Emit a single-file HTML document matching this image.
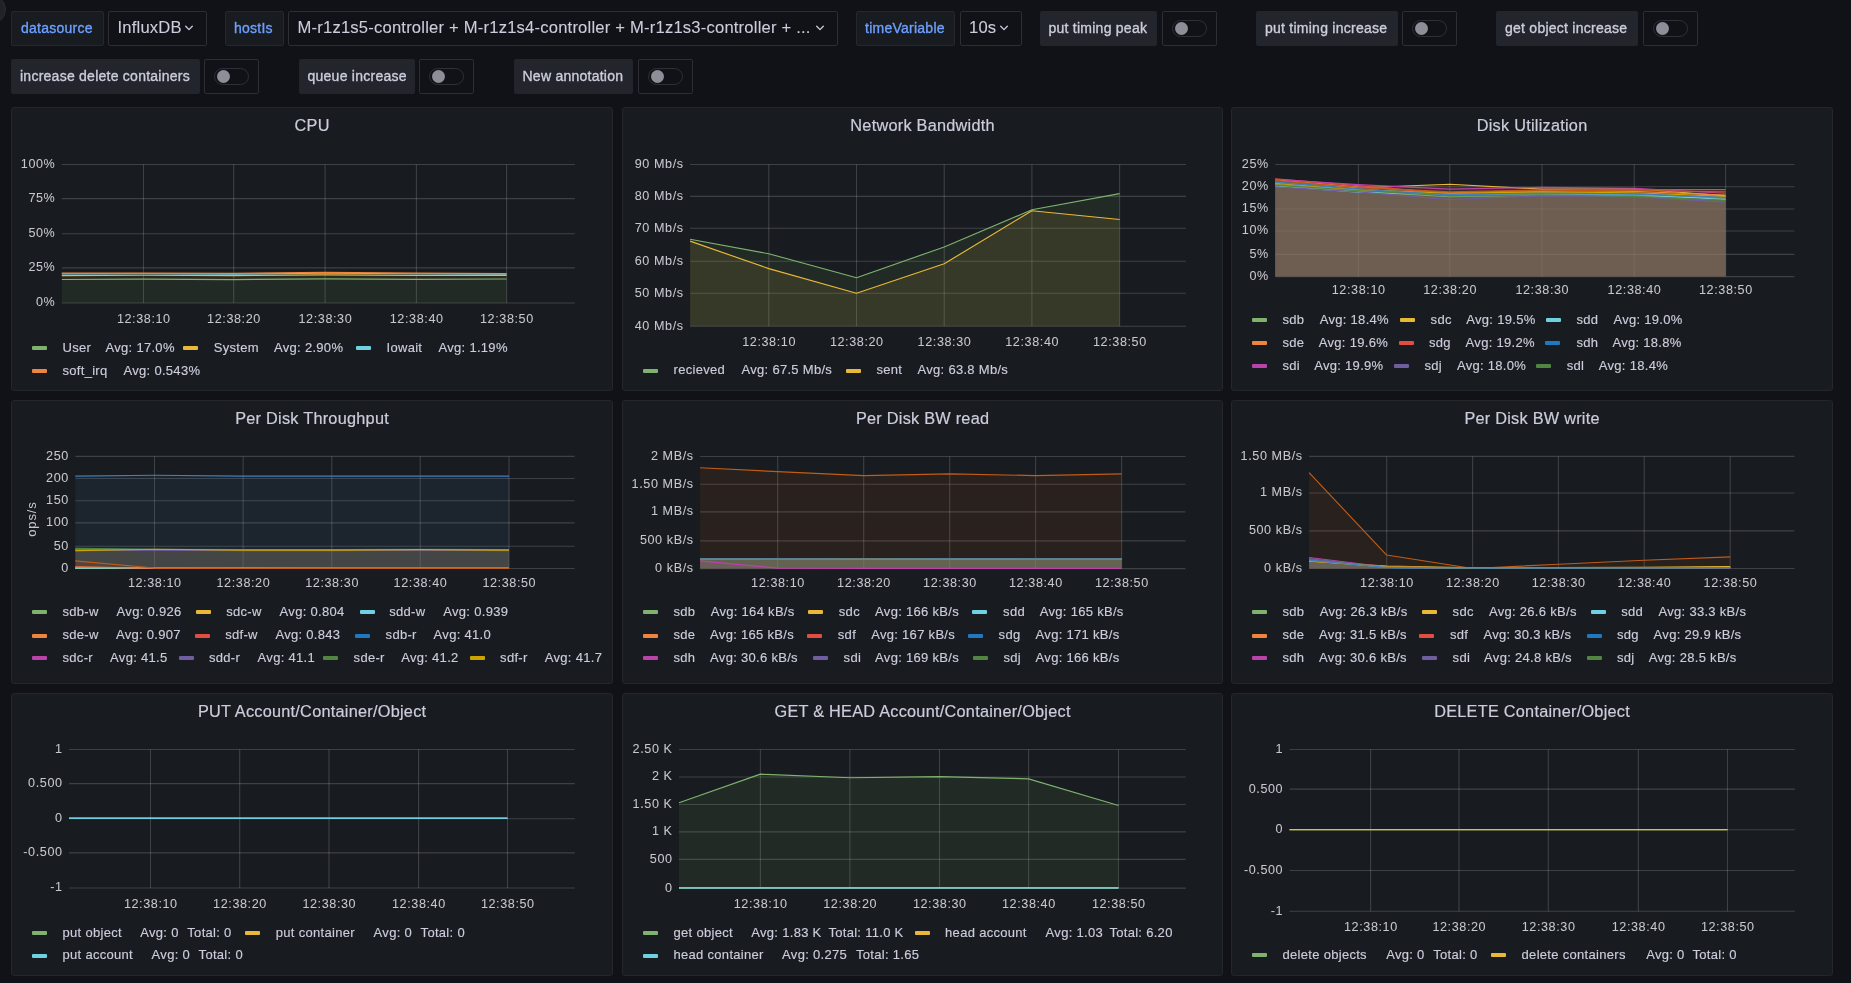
<!DOCTYPE html>
<html><head><meta charset="utf-8"><title>Grafana</title>
<style>
html,body{margin:0;padding:0;width:1851px;height:983px;overflow:hidden;background:#111217;font-family:"Liberation Sans", sans-serif;}
.t{position:absolute;white-space:nowrap;font-family:"Liberation Sans", sans-serif;}
.c{text-align:center;}
svg{overflow:visible;}
</style></head><body><div id="root" style="position:absolute;left:0;top:0;width:1851px;height:983px;will-change:transform">
<div style="position:absolute;left:-23px;top:-5px;width:29px;height:29px;border-radius:50%;background:#202226;border:1px solid #2b2d33;box-sizing:border-box"></div>
<div style="position:absolute;left:11px;top:11px;width:93px;height:35px;box-sizing:border-box;background:#181b1f;border:1px solid #25272c;border-radius:2px"></div>
<div class="t" style="left:21.0px;top:18.1px;font-size:14.0px;line-height:20px;color:#6e9fff;letter-spacing:0.25px;-webkit-text-stroke:0.35px #6e9fff;">datasource</div>
<div style="position:absolute;left:108px;top:11px;width:99px;height:35px;box-sizing:border-box;background:#111217;border:1px solid #2c2e33;border-radius:2px"></div>
<div class="t" style="left:117.5px;top:16.0px;font-size:16.6px;line-height:24px;color:#ccccdc;letter-spacing:0.2px;-webkit-text-stroke:0.1px #ccccdc;">InfluxDB</div>
<svg style="position:absolute;left:184.1px;top:24.0px" width="10" height="8"><path d="M1.7 2.3 L5 5.6 L8.3 2.3" fill="none" stroke="#ccccdc" stroke-width="1.3" stroke-linecap="round" stroke-linejoin="round"/></svg>
<div style="position:absolute;left:225px;top:11px;width:59px;height:35px;box-sizing:border-box;background:#181b1f;border:1px solid #25272c;border-radius:2px"></div>
<div class="t" style="left:234.0px;top:18.1px;font-size:14.0px;line-height:20px;color:#6e9fff;letter-spacing:0.25px;-webkit-text-stroke:0.35px #6e9fff;">hostIs</div>
<div style="position:absolute;left:288px;top:11px;width:550px;height:35px;box-sizing:border-box;background:#111217;border:1px solid #2c2e33;border-radius:2px"></div>
<div class="t" style="left:297.5px;top:16.0px;font-size:16.6px;line-height:24px;color:#ccccdc;letter-spacing:0.2px;-webkit-text-stroke:0.1px #ccccdc;">M-r1z1s5-controller + M-r1z1s4-controller + M-r1z1s3-controller + ...</div>
<svg style="position:absolute;left:815.1px;top:24.0px" width="10" height="8"><path d="M1.7 2.3 L5 5.6 L8.3 2.3" fill="none" stroke="#ccccdc" stroke-width="1.3" stroke-linecap="round" stroke-linejoin="round"/></svg>
<div style="position:absolute;left:856px;top:11px;width:99px;height:35px;box-sizing:border-box;background:#181b1f;border:1px solid #25272c;border-radius:2px"></div>
<div class="t" style="left:865.0px;top:18.1px;font-size:14.0px;line-height:20px;color:#6e9fff;letter-spacing:0.25px;-webkit-text-stroke:0.35px #6e9fff;">timeVariable</div>
<div style="position:absolute;left:960px;top:11px;width:62px;height:35px;box-sizing:border-box;background:#111217;border:1px solid #2c2e33;border-radius:2px"></div>
<div class="t" style="left:969.0px;top:16.0px;font-size:16.6px;line-height:24px;color:#ccccdc;letter-spacing:0.2px;-webkit-text-stroke:0.1px #ccccdc;">10s</div>
<svg style="position:absolute;left:999.1px;top:24.0px" width="10" height="8"><path d="M1.7 2.3 L5 5.6 L8.3 2.3" fill="none" stroke="#ccccdc" stroke-width="1.3" stroke-linecap="round" stroke-linejoin="round"/></svg>
<div style="position:absolute;left:1040px;top:11px;width:117px;height:35px;box-sizing:border-box;background:#22252b;border-radius:2px"></div>
<div class="t" style="left:1048.5px;top:18.1px;font-size:14.0px;line-height:20px;color:#ccccdc;letter-spacing:0.25px;-webkit-text-stroke:0.35px #ccccdc;">put timing peak</div>
<div style="position:absolute;left:1162px;top:11px;width:55px;height:35px;box-sizing:border-box;background:#111217;border:1px solid #2c2e33;border-radius:2px"></div>
<div style="position:absolute;left:1172px;top:19.5px;width:35px;height:17.5px;box-sizing:border-box;border:1px solid #2e3035;border-radius:9px;background:#111217"></div>
<div style="position:absolute;left:1174.8px;top:21.7px;width:13.4px;height:13.4px;border-radius:50%;background:#8e8e99"></div>
<div style="position:absolute;left:1256px;top:11px;width:142px;height:35px;box-sizing:border-box;background:#22252b;border-radius:2px"></div>
<div class="t" style="left:1265.0px;top:18.1px;font-size:14.0px;line-height:20px;color:#ccccdc;letter-spacing:0.25px;-webkit-text-stroke:0.35px #ccccdc;">put timing increase</div>
<div style="position:absolute;left:1402px;top:11px;width:55px;height:35px;box-sizing:border-box;background:#111217;border:1px solid #2c2e33;border-radius:2px"></div>
<div style="position:absolute;left:1412px;top:19.5px;width:35px;height:17.5px;box-sizing:border-box;border:1px solid #2e3035;border-radius:9px;background:#111217"></div>
<div style="position:absolute;left:1414.8px;top:21.7px;width:13.4px;height:13.4px;border-radius:50%;background:#8e8e99"></div>
<div style="position:absolute;left:1496px;top:11px;width:142px;height:35px;box-sizing:border-box;background:#22252b;border-radius:2px"></div>
<div class="t" style="left:1505.0px;top:18.1px;font-size:14.0px;line-height:20px;color:#ccccdc;letter-spacing:0.25px;-webkit-text-stroke:0.35px #ccccdc;">get object increase</div>
<div style="position:absolute;left:1643px;top:11px;width:55px;height:35px;box-sizing:border-box;background:#111217;border:1px solid #2c2e33;border-radius:2px"></div>
<div style="position:absolute;left:1653px;top:19.5px;width:35px;height:17.5px;box-sizing:border-box;border:1px solid #2e3035;border-radius:9px;background:#111217"></div>
<div style="position:absolute;left:1655.8px;top:21.7px;width:13.4px;height:13.4px;border-radius:50%;background:#8e8e99"></div>
<div style="position:absolute;left:11px;top:59px;width:189px;height:35px;box-sizing:border-box;background:#22252b;border-radius:2px"></div>
<div class="t" style="left:20.0px;top:66.1px;font-size:14.0px;line-height:20px;color:#ccccdc;letter-spacing:0.25px;-webkit-text-stroke:0.35px #ccccdc;">increase delete containers</div>
<div style="position:absolute;left:204px;top:59px;width:55px;height:35px;box-sizing:border-box;background:#111217;border:1px solid #2c2e33;border-radius:2px"></div>
<div style="position:absolute;left:214px;top:67.5px;width:35px;height:17.5px;box-sizing:border-box;border:1px solid #2e3035;border-radius:9px;background:#111217"></div>
<div style="position:absolute;left:216.8px;top:69.7px;width:13.4px;height:13.4px;border-radius:50%;background:#8e8e99"></div>
<div style="position:absolute;left:299px;top:59px;width:116px;height:35px;box-sizing:border-box;background:#22252b;border-radius:2px"></div>
<div class="t" style="left:307.5px;top:66.1px;font-size:14.0px;line-height:20px;color:#ccccdc;letter-spacing:0.25px;-webkit-text-stroke:0.35px #ccccdc;">queue increase</div>
<div style="position:absolute;left:419px;top:59px;width:55px;height:35px;box-sizing:border-box;background:#111217;border:1px solid #2c2e33;border-radius:2px"></div>
<div style="position:absolute;left:429px;top:67.5px;width:35px;height:17.5px;box-sizing:border-box;border:1px solid #2e3035;border-radius:9px;background:#111217"></div>
<div style="position:absolute;left:431.8px;top:69.7px;width:13.4px;height:13.4px;border-radius:50%;background:#8e8e99"></div>
<div style="position:absolute;left:514px;top:59px;width:119px;height:35px;box-sizing:border-box;background:#22252b;border-radius:2px"></div>
<div class="t" style="left:522.5px;top:66.1px;font-size:14.0px;line-height:20px;color:#ccccdc;letter-spacing:0.25px;-webkit-text-stroke:0.35px #ccccdc;">New annotation</div>
<div style="position:absolute;left:638px;top:59px;width:55px;height:35px;box-sizing:border-box;background:#111217;border:1px solid #2c2e33;border-radius:2px"></div>
<div style="position:absolute;left:648px;top:67.5px;width:35px;height:17.5px;box-sizing:border-box;border:1px solid #2e3035;border-radius:9px;background:#111217"></div>
<div style="position:absolute;left:650.8px;top:69.7px;width:13.4px;height:13.4px;border-radius:50%;background:#8e8e99"></div>
<div style="position:absolute;left:11px;top:107px;width:602px;height:284px;box-sizing:border-box;background:#181b1f;border:1px solid #24262b;border-radius:3px"></div>
<div class="t c" style="left:12.1px;width:600px;top:113.5px;font-size:16.3px;line-height:23px;color:#ccccdc;letter-spacing:0.25px;-webkit-text-stroke:0.2px #ccccdc;">CPU</div>
<svg style="position:absolute;left:0;top:0" width="1851" height="983" viewBox="0 0 1851 983"><line x1="61.8" y1="164.5" x2="574.9" y2="164.5" stroke="rgba(200,200,200,0.22)" stroke-width="1.1"/><line x1="61.8" y1="198.6" x2="574.9" y2="198.6" stroke="rgba(200,200,200,0.22)" stroke-width="1.1"/><line x1="61.8" y1="233.8" x2="574.9" y2="233.8" stroke="rgba(200,200,200,0.22)" stroke-width="1.1"/><line x1="61.8" y1="267.9" x2="574.9" y2="267.9" stroke="rgba(200,200,200,0.22)" stroke-width="1.1"/><line x1="61.8" y1="303.0" x2="574.9" y2="303.0" stroke="rgba(200,200,200,0.22)" stroke-width="1.1"/><line x1="143.5" y1="164.5" x2="143.5" y2="303.0" stroke="rgba(200,200,200,0.22)" stroke-width="1.1"/><line x1="233.7" y1="164.5" x2="233.7" y2="303.0" stroke="rgba(200,200,200,0.22)" stroke-width="1.1"/><line x1="325.1" y1="164.5" x2="325.1" y2="303.0" stroke="rgba(200,200,200,0.22)" stroke-width="1.1"/><line x1="416.4" y1="164.5" x2="416.4" y2="303.0" stroke="rgba(200,200,200,0.22)" stroke-width="1.1"/><line x1="506.6" y1="164.5" x2="506.6" y2="303.0" stroke="rgba(200,200,200,0.22)" stroke-width="1.1"/><polygon points="61.80,303.00 61.80,279.45 143.50,279.18 233.70,279.59 325.10,278.90 416.40,279.32 506.60,279.04 506.60,303.00" fill="#7EB26D" fill-opacity="0.1" stroke="none"/><polygon points="61.80,275.58 143.50,275.30 233.70,275.58 325.10,274.88 416.40,275.44 506.60,275.44 506.60,279.04 416.40,279.32 325.10,278.90 233.70,279.59 143.50,279.18 61.80,279.45" fill="#EAB839" fill-opacity="0.1" stroke="none"/><polygon points="61.80,273.92 143.50,273.78 233.70,274.05 325.10,273.22 416.40,273.78 506.60,274.19 506.60,275.44 416.40,275.44 325.10,274.88 233.70,275.58 143.50,275.30 61.80,275.58" fill="#6ED0E0" fill-opacity="0.1" stroke="none"/><polygon points="61.80,273.08 143.50,273.08 233.70,273.36 325.10,272.39 416.40,273.08 506.60,273.64 506.60,274.19 416.40,273.78 325.10,273.22 233.70,274.05 143.50,273.78 61.80,273.92" fill="#EF843C" fill-opacity="0.1" stroke="none"/><polyline points="61.80,279.45 143.50,279.18 233.70,279.59 325.10,278.90 416.40,279.32 506.60,279.04" fill="none" stroke="#7EB26D" stroke-width="1.15" stroke-linejoin="round"/><polyline points="61.80,275.58 143.50,275.30 233.70,275.58 325.10,274.88 416.40,275.44 506.60,275.44" fill="none" stroke="#EAB839" stroke-width="1.15" stroke-linejoin="round"/><polyline points="61.80,273.92 143.50,273.78 233.70,274.05 325.10,273.22 416.40,273.78 506.60,274.19" fill="none" stroke="#6ED0E0" stroke-width="1.15" stroke-linejoin="round"/><polyline points="61.80,273.08 143.50,273.08 233.70,273.36 325.10,272.39 416.40,273.08 506.60,273.64" fill="none" stroke="#EF843C" stroke-width="1.15" stroke-linejoin="round"/></svg>
<div class="t" style="right:1795.6px;top:154.9px;font-size:12.6px;line-height:18px;color:#c7c7d1;letter-spacing:0.6px;-webkit-text-stroke:0.05px #c7c7d1;">100%</div>
<div class="t" style="right:1795.6px;top:189.0px;font-size:12.6px;line-height:18px;color:#c7c7d1;letter-spacing:0.6px;-webkit-text-stroke:0.05px #c7c7d1;">75%</div>
<div class="t" style="right:1795.6px;top:224.2px;font-size:12.6px;line-height:18px;color:#c7c7d1;letter-spacing:0.6px;-webkit-text-stroke:0.05px #c7c7d1;">50%</div>
<div class="t" style="right:1795.6px;top:258.3px;font-size:12.6px;line-height:18px;color:#c7c7d1;letter-spacing:0.6px;-webkit-text-stroke:0.05px #c7c7d1;">25%</div>
<div class="t" style="right:1795.6px;top:293.4px;font-size:12.6px;line-height:18px;color:#c7c7d1;letter-spacing:0.6px;-webkit-text-stroke:0.05px #c7c7d1;">0%</div>
<div class="t c" style="left:-156.2px;width:600px;top:309.5px;font-size:12.6px;line-height:18px;color:#c7c7d1;letter-spacing:0.6px;-webkit-text-stroke:0.05px #c7c7d1;">12:38:10</div>
<div class="t c" style="left:-66.0px;width:600px;top:309.5px;font-size:12.6px;line-height:18px;color:#c7c7d1;letter-spacing:0.6px;-webkit-text-stroke:0.05px #c7c7d1;">12:38:20</div>
<div class="t c" style="left:25.4px;width:600px;top:309.5px;font-size:12.6px;line-height:18px;color:#c7c7d1;letter-spacing:0.6px;-webkit-text-stroke:0.05px #c7c7d1;">12:38:30</div>
<div class="t c" style="left:116.7px;width:600px;top:309.5px;font-size:12.6px;line-height:18px;color:#c7c7d1;letter-spacing:0.6px;-webkit-text-stroke:0.05px #c7c7d1;">12:38:40</div>
<div class="t c" style="left:206.9px;width:600px;top:309.5px;font-size:12.6px;line-height:18px;color:#c7c7d1;letter-spacing:0.6px;-webkit-text-stroke:0.05px #c7c7d1;">12:38:50</div>
<div style="position:absolute;left:32px;top:346px;width:15px;height:4px;border-radius:1px;background:#7EB26D"></div>
<div class="t" style="left:62.5px;top:337.7px;font-size:13.0px;line-height:19px;color:#ccccdc;letter-spacing:0.3px;-webkit-text-stroke:0.15px #ccccdc;">User</div>
<div class="t" style="left:105.5px;top:337.7px;font-size:13.0px;line-height:19px;color:#ccccdc;letter-spacing:0.3px;-webkit-text-stroke:0.15px #ccccdc;">Avg: 17.0%</div>
<div style="position:absolute;left:183px;top:346px;width:15px;height:4px;border-radius:1px;background:#EAB839"></div>
<div class="t" style="left:213.8px;top:337.7px;font-size:13.0px;line-height:19px;color:#ccccdc;letter-spacing:0.3px;-webkit-text-stroke:0.15px #ccccdc;">System</div>
<div class="t" style="left:274.0px;top:337.7px;font-size:13.0px;line-height:19px;color:#ccccdc;letter-spacing:0.3px;-webkit-text-stroke:0.15px #ccccdc;">Avg: 2.90%</div>
<div style="position:absolute;left:356.3px;top:346px;width:15px;height:4px;border-radius:1px;background:#6ED0E0"></div>
<div class="t" style="left:386.5px;top:337.7px;font-size:13.0px;line-height:19px;color:#ccccdc;letter-spacing:0.3px;-webkit-text-stroke:0.15px #ccccdc;">Iowait</div>
<div class="t" style="left:438.5px;top:337.7px;font-size:13.0px;line-height:19px;color:#ccccdc;letter-spacing:0.3px;-webkit-text-stroke:0.15px #ccccdc;">Avg: 1.19%</div>
<div style="position:absolute;left:32px;top:369px;width:15px;height:4px;border-radius:1px;background:#EF843C"></div>
<div class="t" style="left:62.5px;top:360.7px;font-size:13.0px;line-height:19px;color:#ccccdc;letter-spacing:0.3px;-webkit-text-stroke:0.15px #ccccdc;">soft_irq</div>
<div class="t" style="left:123.5px;top:360.7px;font-size:13.0px;line-height:19px;color:#ccccdc;letter-spacing:0.3px;-webkit-text-stroke:0.15px #ccccdc;">Avg: 0.543%</div>
<div style="position:absolute;left:622px;top:107px;width:601px;height:284px;box-sizing:border-box;background:#181b1f;border:1px solid #24262b;border-radius:3px"></div>
<div class="t c" style="left:622.6px;width:600px;top:113.5px;font-size:16.3px;line-height:23px;color:#ccccdc;letter-spacing:0.25px;-webkit-text-stroke:0.2px #ccccdc;">Network Bandwidth</div>
<svg style="position:absolute;left:0;top:0" width="1851" height="983" viewBox="0 0 1851 983"><line x1="690.1" y1="164.5" x2="1186.0" y2="164.5" stroke="rgba(200,200,200,0.22)" stroke-width="1.1"/><line x1="690.1" y1="196.4" x2="1186.0" y2="196.4" stroke="rgba(200,200,200,0.22)" stroke-width="1.1"/><line x1="690.1" y1="228.3" x2="1186.0" y2="228.3" stroke="rgba(200,200,200,0.22)" stroke-width="1.1"/><line x1="690.1" y1="261.3" x2="1186.0" y2="261.3" stroke="rgba(200,200,200,0.22)" stroke-width="1.1"/><line x1="690.1" y1="293.2" x2="1186.0" y2="293.2" stroke="rgba(200,200,200,0.22)" stroke-width="1.1"/><line x1="690.1" y1="326.2" x2="1186.0" y2="326.2" stroke="rgba(200,200,200,0.22)" stroke-width="1.1"/><line x1="768.8" y1="164.5" x2="768.8" y2="326.2" stroke="rgba(200,200,200,0.22)" stroke-width="1.1"/><line x1="856.5" y1="164.5" x2="856.5" y2="326.2" stroke="rgba(200,200,200,0.22)" stroke-width="1.1"/><line x1="944.2" y1="164.5" x2="944.2" y2="326.2" stroke="rgba(200,200,200,0.22)" stroke-width="1.1"/><line x1="1031.9" y1="164.5" x2="1031.9" y2="326.2" stroke="rgba(200,200,200,0.22)" stroke-width="1.1"/><line x1="1119.6" y1="164.5" x2="1119.6" y2="326.2" stroke="rgba(200,200,200,0.22)" stroke-width="1.1"/><polygon points="690.10,326.20 690.10,239.21 768.80,253.76 856.50,277.69 944.20,246.97 1031.90,209.78 1119.60,193.61 1119.60,326.20" fill="#7EB26D" fill-opacity="0.1" stroke="none"/><polygon points="690.10,326.20 690.10,241.15 768.80,268.63 856.50,293.21 944.20,263.78 1031.90,210.75 1119.60,219.48 1119.60,326.20" fill="#EAB839" fill-opacity="0.1" stroke="none"/><polyline points="690.10,239.21 768.80,253.76 856.50,277.69 944.20,246.97 1031.90,209.78 1119.60,193.61" fill="none" stroke="#7EB26D" stroke-width="1.15" stroke-linejoin="round"/><polyline points="690.10,241.15 768.80,268.63 856.50,293.21 944.20,263.78 1031.90,210.75 1119.60,219.48" fill="none" stroke="#EAB839" stroke-width="1.15" stroke-linejoin="round"/></svg>
<div class="t" style="right:1167.3px;top:154.9px;font-size:12.6px;line-height:18px;color:#c7c7d1;letter-spacing:0.6px;-webkit-text-stroke:0.05px #c7c7d1;">90 Mb/s</div>
<div class="t" style="right:1167.3px;top:186.8px;font-size:12.6px;line-height:18px;color:#c7c7d1;letter-spacing:0.6px;-webkit-text-stroke:0.05px #c7c7d1;">80 Mb/s</div>
<div class="t" style="right:1167.3px;top:218.7px;font-size:12.6px;line-height:18px;color:#c7c7d1;letter-spacing:0.6px;-webkit-text-stroke:0.05px #c7c7d1;">70 Mb/s</div>
<div class="t" style="right:1167.3px;top:251.7px;font-size:12.6px;line-height:18px;color:#c7c7d1;letter-spacing:0.6px;-webkit-text-stroke:0.05px #c7c7d1;">60 Mb/s</div>
<div class="t" style="right:1167.3px;top:283.6px;font-size:12.6px;line-height:18px;color:#c7c7d1;letter-spacing:0.6px;-webkit-text-stroke:0.05px #c7c7d1;">50 Mb/s</div>
<div class="t" style="right:1167.3px;top:316.6px;font-size:12.6px;line-height:18px;color:#c7c7d1;letter-spacing:0.6px;-webkit-text-stroke:0.05px #c7c7d1;">40 Mb/s</div>
<div class="t c" style="left:469.1px;width:600px;top:332.7px;font-size:12.6px;line-height:18px;color:#c7c7d1;letter-spacing:0.6px;-webkit-text-stroke:0.05px #c7c7d1;">12:38:10</div>
<div class="t c" style="left:556.8px;width:600px;top:332.7px;font-size:12.6px;line-height:18px;color:#c7c7d1;letter-spacing:0.6px;-webkit-text-stroke:0.05px #c7c7d1;">12:38:20</div>
<div class="t c" style="left:644.5px;width:600px;top:332.7px;font-size:12.6px;line-height:18px;color:#c7c7d1;letter-spacing:0.6px;-webkit-text-stroke:0.05px #c7c7d1;">12:38:30</div>
<div class="t c" style="left:732.2px;width:600px;top:332.7px;font-size:12.6px;line-height:18px;color:#c7c7d1;letter-spacing:0.6px;-webkit-text-stroke:0.05px #c7c7d1;">12:38:40</div>
<div class="t c" style="left:819.9px;width:600px;top:332.7px;font-size:12.6px;line-height:18px;color:#c7c7d1;letter-spacing:0.6px;-webkit-text-stroke:0.05px #c7c7d1;">12:38:50</div>
<div style="position:absolute;left:643px;top:368.5px;width:15px;height:4px;border-radius:1px;background:#7EB26D"></div>
<div class="t" style="left:673.5px;top:360.2px;font-size:13.0px;line-height:19px;color:#ccccdc;letter-spacing:0.3px;-webkit-text-stroke:0.15px #ccccdc;">recieved</div>
<div class="t" style="left:741.5px;top:360.2px;font-size:13.0px;line-height:19px;color:#ccccdc;letter-spacing:0.3px;-webkit-text-stroke:0.15px #ccccdc;">Avg: 67.5 Mb/s</div>
<div style="position:absolute;left:846.3px;top:368.5px;width:15px;height:4px;border-radius:1px;background:#EAB839"></div>
<div class="t" style="left:876.5px;top:360.2px;font-size:13.0px;line-height:19px;color:#ccccdc;letter-spacing:0.3px;-webkit-text-stroke:0.15px #ccccdc;">sent</div>
<div class="t" style="left:917.5px;top:360.2px;font-size:13.0px;line-height:19px;color:#ccccdc;letter-spacing:0.3px;-webkit-text-stroke:0.15px #ccccdc;">Avg: 63.8 Mb/s</div>
<div style="position:absolute;left:1231px;top:107px;width:602px;height:284px;box-sizing:border-box;background:#181b1f;border:1px solid #24262b;border-radius:3px"></div>
<div class="t c" style="left:1232.1px;width:600px;top:113.5px;font-size:16.3px;line-height:23px;color:#ccccdc;letter-spacing:0.25px;-webkit-text-stroke:0.2px #ccccdc;">Disk Utilization</div>
<svg style="position:absolute;left:0;top:0" width="1851" height="983" viewBox="0 0 1851 983"><line x1="1275.2" y1="164.5" x2="1794.4" y2="164.5" stroke="rgba(200,200,200,0.22)" stroke-width="1.1"/><line x1="1275.2" y1="186.7" x2="1794.4" y2="186.7" stroke="rgba(200,200,200,0.22)" stroke-width="1.1"/><line x1="1275.2" y1="209.0" x2="1794.4" y2="209.0" stroke="rgba(200,200,200,0.22)" stroke-width="1.1"/><line x1="1275.2" y1="231.0" x2="1794.4" y2="231.0" stroke="rgba(200,200,200,0.22)" stroke-width="1.1"/><line x1="1275.2" y1="254.4" x2="1794.4" y2="254.4" stroke="rgba(200,200,200,0.22)" stroke-width="1.1"/><line x1="1275.2" y1="276.6" x2="1794.4" y2="276.6" stroke="rgba(200,200,200,0.22)" stroke-width="1.1"/><line x1="1358.4" y1="164.5" x2="1358.4" y2="276.6" stroke="rgba(200,200,200,0.22)" stroke-width="1.1"/><line x1="1449.8" y1="164.5" x2="1449.8" y2="276.6" stroke="rgba(200,200,200,0.22)" stroke-width="1.1"/><line x1="1542.0" y1="164.5" x2="1542.0" y2="276.6" stroke="rgba(200,200,200,0.22)" stroke-width="1.1"/><line x1="1634.2" y1="164.5" x2="1634.2" y2="276.6" stroke="rgba(200,200,200,0.22)" stroke-width="1.1"/><line x1="1725.6" y1="164.5" x2="1725.6" y2="276.6" stroke="rgba(200,200,200,0.22)" stroke-width="1.1"/><polygon points="1275.20,276.60 1275.20,184.68 1358.40,191.40 1449.80,196.78 1542.00,194.99 1634.20,195.89 1725.60,198.13 1725.60,276.60" fill="#7EB26D" fill-opacity="0.1" stroke="none"/><polygon points="1275.20,276.60 1275.20,182.44 1358.40,187.82 1449.80,184.23 1542.00,189.16 1634.20,188.71 1725.60,195.89 1725.60,276.60" fill="#EAB839" fill-opacity="0.1" stroke="none"/><polygon points="1275.20,276.60 1275.20,186.02 1358.40,192.30 1449.80,194.54 1542.00,193.65 1634.20,194.54 1725.60,199.48 1725.60,276.60" fill="#6ED0E0" fill-opacity="0.1" stroke="none"/><polygon points="1275.20,276.60 1275.20,179.75 1358.40,186.92 1449.80,192.75 1542.00,190.51 1634.20,191.40 1725.60,194.99 1725.60,276.60" fill="#EF843C" fill-opacity="0.1" stroke="none"/><polygon points="1275.20,276.60 1275.20,178.85 1358.40,185.57 1449.80,193.65 1542.00,191.40 1634.20,189.61 1725.60,189.61 1725.60,276.60" fill="#E24D42" fill-opacity="0.1" stroke="none"/><polygon points="1275.20,276.60 1275.20,181.54 1358.40,188.71 1449.80,194.09 1542.00,192.75 1634.20,193.65 1725.60,196.78 1725.60,276.60" fill="#1F78C1" fill-opacity="0.1" stroke="none"/><polygon points="1275.20,276.60 1275.20,179.30 1358.40,184.68 1449.80,189.16 1542.00,187.37 1634.20,188.27 1725.60,193.20 1725.60,276.60" fill="#BA43A9" fill-opacity="0.1" stroke="none"/><polygon points="1275.20,276.60 1275.20,186.92 1358.40,191.85 1449.80,199.48 1542.00,195.89 1634.20,196.78 1725.60,202.17 1725.60,276.60" fill="#705DA0" fill-opacity="0.1" stroke="none"/><polygon points="1275.20,276.60 1275.20,185.13 1358.40,190.51 1449.80,195.89 1542.00,194.99 1634.20,196.34 1725.60,200.37 1725.60,276.60" fill="#508642" fill-opacity="0.1" stroke="none"/><polygon points="1275.20,276.60 1275.20,183.33 1358.40,189.61 1449.80,193.20 1542.00,191.85 1634.20,192.75 1725.60,196.34 1725.60,276.60" fill="#CCA300" fill-opacity="0.1" stroke="none"/><polygon points="1275.20,276.60 1275.20,182.44 1358.40,189.16 1449.80,194.99 1542.00,193.20 1634.20,194.09 1725.60,197.68 1725.60,276.60" fill="#447EBC" fill-opacity="0.1" stroke="none"/><polygon points="1275.20,276.60 1275.20,180.64 1358.40,187.37 1449.80,191.85 1542.00,190.06 1634.20,190.51 1725.60,191.85 1725.60,276.60" fill="#C15C17" fill-opacity="0.1" stroke="none"/><polyline points="1275.20,184.68 1358.40,191.40 1449.80,196.78 1542.00,194.99 1634.20,195.89 1725.60,198.13" fill="none" stroke="#7EB26D" stroke-width="1.15" stroke-linejoin="round"/><polyline points="1275.20,182.44 1358.40,187.82 1449.80,184.23 1542.00,189.16 1634.20,188.71 1725.60,195.89" fill="none" stroke="#EAB839" stroke-width="1.15" stroke-linejoin="round"/><polyline points="1275.20,186.02 1358.40,192.30 1449.80,194.54 1542.00,193.65 1634.20,194.54 1725.60,199.48" fill="none" stroke="#6ED0E0" stroke-width="1.15" stroke-linejoin="round"/><polyline points="1275.20,179.75 1358.40,186.92 1449.80,192.75 1542.00,190.51 1634.20,191.40 1725.60,194.99" fill="none" stroke="#EF843C" stroke-width="1.15" stroke-linejoin="round"/><polyline points="1275.20,178.85 1358.40,185.57 1449.80,193.65 1542.00,191.40 1634.20,189.61 1725.60,189.61" fill="none" stroke="#E24D42" stroke-width="1.15" stroke-linejoin="round"/><polyline points="1275.20,181.54 1358.40,188.71 1449.80,194.09 1542.00,192.75 1634.20,193.65 1725.60,196.78" fill="none" stroke="#1F78C1" stroke-width="1.15" stroke-linejoin="round"/><polyline points="1275.20,179.30 1358.40,184.68 1449.80,189.16 1542.00,187.37 1634.20,188.27 1725.60,193.20" fill="none" stroke="#BA43A9" stroke-width="1.15" stroke-linejoin="round"/><polyline points="1275.20,186.92 1358.40,191.85 1449.80,199.48 1542.00,195.89 1634.20,196.78 1725.60,202.17" fill="none" stroke="#705DA0" stroke-width="1.15" stroke-linejoin="round"/><polyline points="1275.20,185.13 1358.40,190.51 1449.80,195.89 1542.00,194.99 1634.20,196.34 1725.60,200.37" fill="none" stroke="#508642" stroke-width="1.15" stroke-linejoin="round"/><polyline points="1275.20,183.33 1358.40,189.61 1449.80,193.20 1542.00,191.85 1634.20,192.75 1725.60,196.34" fill="none" stroke="#CCA300" stroke-width="1.15" stroke-linejoin="round"/><polyline points="1275.20,182.44 1358.40,189.16 1449.80,194.99 1542.00,193.20 1634.20,194.09 1725.60,197.68" fill="none" stroke="#447EBC" stroke-width="1.15" stroke-linejoin="round"/><polyline points="1275.20,180.64 1358.40,187.37 1449.80,191.85 1542.00,190.06 1634.20,190.51 1725.60,191.85" fill="none" stroke="#C15C17" stroke-width="1.15" stroke-linejoin="round"/></svg>
<div class="t" style="right:582.2px;top:154.9px;font-size:12.6px;line-height:18px;color:#c7c7d1;letter-spacing:0.6px;-webkit-text-stroke:0.05px #c7c7d1;">25%</div>
<div class="t" style="right:582.2px;top:177.1px;font-size:12.6px;line-height:18px;color:#c7c7d1;letter-spacing:0.6px;-webkit-text-stroke:0.05px #c7c7d1;">20%</div>
<div class="t" style="right:582.2px;top:199.4px;font-size:12.6px;line-height:18px;color:#c7c7d1;letter-spacing:0.6px;-webkit-text-stroke:0.05px #c7c7d1;">15%</div>
<div class="t" style="right:582.2px;top:221.4px;font-size:12.6px;line-height:18px;color:#c7c7d1;letter-spacing:0.6px;-webkit-text-stroke:0.05px #c7c7d1;">10%</div>
<div class="t" style="right:582.2px;top:244.8px;font-size:12.6px;line-height:18px;color:#c7c7d1;letter-spacing:0.6px;-webkit-text-stroke:0.05px #c7c7d1;">5%</div>
<div class="t" style="right:582.2px;top:267.0px;font-size:12.6px;line-height:18px;color:#c7c7d1;letter-spacing:0.6px;-webkit-text-stroke:0.05px #c7c7d1;">0%</div>
<div class="t c" style="left:1058.7px;width:600px;top:281.4px;font-size:12.6px;line-height:18px;color:#c7c7d1;letter-spacing:0.6px;-webkit-text-stroke:0.05px #c7c7d1;">12:38:10</div>
<div class="t c" style="left:1150.1px;width:600px;top:281.4px;font-size:12.6px;line-height:18px;color:#c7c7d1;letter-spacing:0.6px;-webkit-text-stroke:0.05px #c7c7d1;">12:38:20</div>
<div class="t c" style="left:1242.3px;width:600px;top:281.4px;font-size:12.6px;line-height:18px;color:#c7c7d1;letter-spacing:0.6px;-webkit-text-stroke:0.05px #c7c7d1;">12:38:30</div>
<div class="t c" style="left:1334.5px;width:600px;top:281.4px;font-size:12.6px;line-height:18px;color:#c7c7d1;letter-spacing:0.6px;-webkit-text-stroke:0.05px #c7c7d1;">12:38:40</div>
<div class="t c" style="left:1425.9px;width:600px;top:281.4px;font-size:12.6px;line-height:18px;color:#c7c7d1;letter-spacing:0.6px;-webkit-text-stroke:0.05px #c7c7d1;">12:38:50</div>
<div style="position:absolute;left:1252px;top:318.1px;width:15px;height:4px;border-radius:1px;background:#7EB26D"></div>
<div class="t" style="left:1282.5px;top:309.8px;font-size:13.0px;line-height:19px;color:#ccccdc;letter-spacing:0.3px;-webkit-text-stroke:0.15px #ccccdc;">sdb</div>
<div class="t" style="left:1319.7px;top:309.8px;font-size:13.0px;line-height:19px;color:#ccccdc;letter-spacing:0.3px;-webkit-text-stroke:0.15px #ccccdc;">Avg: 18.4%</div>
<div style="position:absolute;left:1399.6px;top:318.1px;width:15px;height:4px;border-radius:1px;background:#EAB839"></div>
<div class="t" style="left:1430.6px;top:309.8px;font-size:13.0px;line-height:19px;color:#ccccdc;letter-spacing:0.3px;-webkit-text-stroke:0.15px #ccccdc;">sdc</div>
<div class="t" style="left:1466.3px;top:309.8px;font-size:13.0px;line-height:19px;color:#ccccdc;letter-spacing:0.3px;-webkit-text-stroke:0.15px #ccccdc;">Avg: 19.5%</div>
<div style="position:absolute;left:1546.4px;top:318.1px;width:15px;height:4px;border-radius:1px;background:#6ED0E0"></div>
<div class="t" style="left:1576.5px;top:309.8px;font-size:13.0px;line-height:19px;color:#ccccdc;letter-spacing:0.3px;-webkit-text-stroke:0.15px #ccccdc;">sdd</div>
<div class="t" style="left:1613.4px;top:309.8px;font-size:13.0px;line-height:19px;color:#ccccdc;letter-spacing:0.3px;-webkit-text-stroke:0.15px #ccccdc;">Avg: 19.0%</div>
<div style="position:absolute;left:1252px;top:341.1px;width:15px;height:4px;border-radius:1px;background:#EF843C"></div>
<div class="t" style="left:1282.5px;top:332.8px;font-size:13.0px;line-height:19px;color:#ccccdc;letter-spacing:0.3px;-webkit-text-stroke:0.15px #ccccdc;">sde</div>
<div class="t" style="left:1318.8px;top:332.8px;font-size:13.0px;line-height:19px;color:#ccccdc;letter-spacing:0.3px;-webkit-text-stroke:0.15px #ccccdc;">Avg: 19.6%</div>
<div style="position:absolute;left:1398.6px;top:341.1px;width:15px;height:4px;border-radius:1px;background:#E24D42"></div>
<div class="t" style="left:1429.0px;top:332.8px;font-size:13.0px;line-height:19px;color:#ccccdc;letter-spacing:0.3px;-webkit-text-stroke:0.15px #ccccdc;">sdg</div>
<div class="t" style="left:1465.6px;top:332.8px;font-size:13.0px;line-height:19px;color:#ccccdc;letter-spacing:0.3px;-webkit-text-stroke:0.15px #ccccdc;">Avg: 19.2%</div>
<div style="position:absolute;left:1545.4px;top:341.1px;width:15px;height:4px;border-radius:1px;background:#1F78C1"></div>
<div class="t" style="left:1576.5px;top:332.8px;font-size:13.0px;line-height:19px;color:#ccccdc;letter-spacing:0.3px;-webkit-text-stroke:0.15px #ccccdc;">sdh</div>
<div class="t" style="left:1612.4px;top:332.8px;font-size:13.0px;line-height:19px;color:#ccccdc;letter-spacing:0.3px;-webkit-text-stroke:0.15px #ccccdc;">Avg: 18.8%</div>
<div style="position:absolute;left:1252px;top:364.1px;width:15px;height:4px;border-radius:1px;background:#BA43A9"></div>
<div class="t" style="left:1282.5px;top:355.8px;font-size:13.0px;line-height:19px;color:#ccccdc;letter-spacing:0.3px;-webkit-text-stroke:0.15px #ccccdc;">sdi</div>
<div class="t" style="left:1314.2px;top:355.8px;font-size:13.0px;line-height:19px;color:#ccccdc;letter-spacing:0.3px;-webkit-text-stroke:0.15px #ccccdc;">Avg: 19.9%</div>
<div style="position:absolute;left:1394px;top:364.1px;width:15px;height:4px;border-radius:1px;background:#705DA0"></div>
<div class="t" style="left:1424.4px;top:355.8px;font-size:13.0px;line-height:19px;color:#ccccdc;letter-spacing:0.3px;-webkit-text-stroke:0.15px #ccccdc;">sdj</div>
<div class="t" style="left:1456.9px;top:355.8px;font-size:13.0px;line-height:19px;color:#ccccdc;letter-spacing:0.3px;-webkit-text-stroke:0.15px #ccccdc;">Avg: 18.0%</div>
<div style="position:absolute;left:1536.3px;top:364.1px;width:15px;height:4px;border-radius:1px;background:#508642"></div>
<div class="t" style="left:1566.7px;top:355.8px;font-size:13.0px;line-height:19px;color:#ccccdc;letter-spacing:0.3px;-webkit-text-stroke:0.15px #ccccdc;">sdl</div>
<div class="t" style="left:1598.8px;top:355.8px;font-size:13.0px;line-height:19px;color:#ccccdc;letter-spacing:0.3px;-webkit-text-stroke:0.15px #ccccdc;">Avg: 18.4%</div>
<div style="position:absolute;left:11px;top:400px;width:602px;height:284px;box-sizing:border-box;background:#181b1f;border:1px solid #24262b;border-radius:3px"></div>
<div class="t c" style="left:12.1px;width:600px;top:406.5px;font-size:16.3px;line-height:23px;color:#ccccdc;letter-spacing:0.25px;-webkit-text-stroke:0.2px #ccccdc;">Per Disk Throughput</div>
<svg style="position:absolute;left:0;top:0" width="1851" height="983" viewBox="0 0 1851 983"><line x1="75.3" y1="456.4" x2="574.6" y2="456.4" stroke="rgba(200,200,200,0.22)" stroke-width="1.1"/><line x1="75.3" y1="478.5" x2="574.6" y2="478.5" stroke="rgba(200,200,200,0.22)" stroke-width="1.1"/><line x1="75.3" y1="500.8" x2="574.6" y2="500.8" stroke="rgba(200,200,200,0.22)" stroke-width="1.1"/><line x1="75.3" y1="522.9" x2="574.6" y2="522.9" stroke="rgba(200,200,200,0.22)" stroke-width="1.1"/><line x1="75.3" y1="546.3" x2="574.6" y2="546.3" stroke="rgba(200,200,200,0.22)" stroke-width="1.1"/><line x1="75.3" y1="568.5" x2="574.6" y2="568.5" stroke="rgba(200,200,200,0.22)" stroke-width="1.1"/><line x1="154.5" y1="456.4" x2="154.5" y2="568.5" stroke="rgba(200,200,200,0.22)" stroke-width="1.1"/><line x1="243.1" y1="456.4" x2="243.1" y2="568.5" stroke="rgba(200,200,200,0.22)" stroke-width="1.1"/><line x1="331.8" y1="456.4" x2="331.8" y2="568.5" stroke="rgba(200,200,200,0.22)" stroke-width="1.1"/><line x1="420.2" y1="456.4" x2="420.2" y2="568.5" stroke="rgba(200,200,200,0.22)" stroke-width="1.1"/><line x1="509.0" y1="456.4" x2="509.0" y2="568.5" stroke="rgba(200,200,200,0.22)" stroke-width="1.1"/><polygon points="75.30,568.50 75.30,476.13 154.50,475.23 243.10,476.13 331.80,476.13 420.20,476.13 509.00,476.13 509.00,568.50" fill="#447EBC" fill-opacity="0.1" stroke="none"/><polygon points="75.30,568.50 75.30,548.77 154.50,549.67 243.10,550.12 331.80,550.12 420.20,550.12 509.00,550.12 509.00,568.50" fill="#1F78C1" fill-opacity="0.1" stroke="none"/><polygon points="75.30,568.50 75.30,549.67 154.50,549.67 243.10,550.12 331.80,550.12 420.20,549.67 509.00,550.12 509.00,568.50" fill="#BA43A9" fill-opacity="0.1" stroke="none"/><polygon points="75.30,568.50 75.30,550.56 154.50,550.12 243.10,550.56 331.80,550.56 420.20,550.12 509.00,550.56 509.00,568.50" fill="#705DA0" fill-opacity="0.1" stroke="none"/><polygon points="75.30,568.50 75.30,548.32 154.50,549.22 243.10,549.67 331.80,549.67 420.20,549.22 509.00,549.67 509.00,568.50" fill="#508642" fill-opacity="0.1" stroke="none"/><polygon points="75.30,568.50 75.30,568.05 154.50,568.28 243.10,568.28 331.80,568.28 420.20,568.28 509.00,568.28 509.00,568.50" fill="#7EB26D" fill-opacity="0.1" stroke="none"/><polygon points="75.30,568.50 75.30,568.05 154.50,568.28 243.10,568.28 331.80,568.28 420.20,568.28 509.00,568.28 509.00,568.50" fill="#EAB839" fill-opacity="0.1" stroke="none"/><polygon points="75.30,568.50 75.30,568.05 154.50,568.28 243.10,568.28 331.80,568.28 420.20,568.28 509.00,568.28 509.00,568.50" fill="#6ED0E0" fill-opacity="0.1" stroke="none"/><polygon points="75.30,568.50 75.30,566.71 154.50,568.28 243.10,568.37 331.80,568.37 420.20,568.37 509.00,568.37 509.00,568.50" fill="#E24D42" fill-opacity="0.1" stroke="none"/><polygon points="75.30,568.50 75.30,567.15 154.50,568.05 243.10,568.37 331.80,568.37 420.20,568.37 509.00,568.37 509.00,568.50" fill="#EF843C" fill-opacity="0.1" stroke="none"/><polygon points="75.30,568.50 75.30,550.56 154.50,549.22 243.10,550.12 331.80,550.12 420.20,549.67 509.00,550.12 509.00,568.50" fill="#CCA300" fill-opacity="0.1" stroke="none"/><polygon points="75.30,568.50 75.30,560.88 154.50,568.05 243.10,568.50 331.80,568.41 420.20,568.41 509.00,568.41 509.00,568.50" fill="#C15C17" fill-opacity="0.1" stroke="none"/><polyline points="75.30,476.13 154.50,475.23 243.10,476.13 331.80,476.13 420.20,476.13 509.00,476.13" fill="none" stroke="#447EBC" stroke-width="1.15" stroke-linejoin="round"/><polyline points="75.30,548.77 154.50,549.67 243.10,550.12 331.80,550.12 420.20,550.12 509.00,550.12" fill="none" stroke="#1F78C1" stroke-width="1.15" stroke-linejoin="round"/><polyline points="75.30,549.67 154.50,549.67 243.10,550.12 331.80,550.12 420.20,549.67 509.00,550.12" fill="none" stroke="#BA43A9" stroke-width="1.15" stroke-linejoin="round"/><polyline points="75.30,550.56 154.50,550.12 243.10,550.56 331.80,550.56 420.20,550.12 509.00,550.56" fill="none" stroke="#705DA0" stroke-width="1.15" stroke-linejoin="round"/><polyline points="75.30,548.32 154.50,549.22 243.10,549.67 331.80,549.67 420.20,549.22 509.00,549.67" fill="none" stroke="#508642" stroke-width="1.15" stroke-linejoin="round"/><polyline points="75.30,568.05 154.50,568.28 243.10,568.28 331.80,568.28 420.20,568.28 509.00,568.28" fill="none" stroke="#7EB26D" stroke-width="1.15" stroke-linejoin="round"/><polyline points="75.30,568.05 154.50,568.28 243.10,568.28 331.80,568.28 420.20,568.28 509.00,568.28" fill="none" stroke="#EAB839" stroke-width="1.15" stroke-linejoin="round"/><polyline points="75.30,568.05 154.50,568.28 243.10,568.28 331.80,568.28 420.20,568.28 509.00,568.28" fill="none" stroke="#6ED0E0" stroke-width="1.15" stroke-linejoin="round"/><polyline points="75.30,566.71 154.50,568.28 243.10,568.37 331.80,568.37 420.20,568.37 509.00,568.37" fill="none" stroke="#E24D42" stroke-width="1.15" stroke-linejoin="round"/><polyline points="75.30,567.15 154.50,568.05 243.10,568.37 331.80,568.37 420.20,568.37 509.00,568.37" fill="none" stroke="#EF843C" stroke-width="1.15" stroke-linejoin="round"/><polyline points="75.30,550.56 154.50,549.22 243.10,550.12 331.80,550.12 420.20,549.67 509.00,550.12" fill="none" stroke="#CCA300" stroke-width="1.15" stroke-linejoin="round"/><polyline points="75.30,560.88 154.50,568.05 243.10,568.50 331.80,568.41 420.20,568.41 509.00,568.41" fill="none" stroke="#C15C17" stroke-width="1.15" stroke-linejoin="round"/></svg>
<div class="t" style="right:1782.1px;top:446.8px;font-size:12.6px;line-height:18px;color:#c7c7d1;letter-spacing:0.6px;-webkit-text-stroke:0.05px #c7c7d1;">250</div>
<div class="t" style="right:1782.1px;top:468.9px;font-size:12.6px;line-height:18px;color:#c7c7d1;letter-spacing:0.6px;-webkit-text-stroke:0.05px #c7c7d1;">200</div>
<div class="t" style="right:1782.1px;top:491.2px;font-size:12.6px;line-height:18px;color:#c7c7d1;letter-spacing:0.6px;-webkit-text-stroke:0.05px #c7c7d1;">150</div>
<div class="t" style="right:1782.1px;top:513.3px;font-size:12.6px;line-height:18px;color:#c7c7d1;letter-spacing:0.6px;-webkit-text-stroke:0.05px #c7c7d1;">100</div>
<div class="t" style="right:1782.1px;top:536.7px;font-size:12.6px;line-height:18px;color:#c7c7d1;letter-spacing:0.6px;-webkit-text-stroke:0.05px #c7c7d1;">50</div>
<div class="t" style="right:1782.1px;top:558.9px;font-size:12.6px;line-height:18px;color:#c7c7d1;letter-spacing:0.6px;-webkit-text-stroke:0.05px #c7c7d1;">0</div>
<div class="t c" style="left:-145.2px;width:600px;top:573.7px;font-size:12.6px;line-height:18px;color:#c7c7d1;letter-spacing:0.6px;-webkit-text-stroke:0.05px #c7c7d1;">12:38:10</div>
<div class="t c" style="left:-56.6px;width:600px;top:573.7px;font-size:12.6px;line-height:18px;color:#c7c7d1;letter-spacing:0.6px;-webkit-text-stroke:0.05px #c7c7d1;">12:38:20</div>
<div class="t c" style="left:32.1px;width:600px;top:573.7px;font-size:12.6px;line-height:18px;color:#c7c7d1;letter-spacing:0.6px;-webkit-text-stroke:0.05px #c7c7d1;">12:38:30</div>
<div class="t c" style="left:120.5px;width:600px;top:573.7px;font-size:12.6px;line-height:18px;color:#c7c7d1;letter-spacing:0.6px;-webkit-text-stroke:0.05px #c7c7d1;">12:38:40</div>
<div class="t c" style="left:209.3px;width:600px;top:573.7px;font-size:12.6px;line-height:18px;color:#c7c7d1;letter-spacing:0.6px;-webkit-text-stroke:0.05px #c7c7d1;">12:38:50</div>
<div class="t c" style="left:-8.25px;top:511px;width:80px;line-height:16px;font-size:13px;letter-spacing:0.9px;color:#c7c7d1;transform:rotate(-90deg)">ops/s</div>
<div style="position:absolute;left:32px;top:609.9px;width:15px;height:4px;border-radius:1px;background:#7EB26D"></div>
<div class="t" style="left:62.5px;top:601.6px;font-size:13.0px;line-height:19px;color:#ccccdc;letter-spacing:0.3px;-webkit-text-stroke:0.15px #ccccdc;">sdb-w</div>
<div class="t" style="left:116.6px;top:601.6px;font-size:13.0px;line-height:19px;color:#ccccdc;letter-spacing:0.3px;-webkit-text-stroke:0.15px #ccccdc;">Avg: 0.926</div>
<div style="position:absolute;left:196.4px;top:609.9px;width:15px;height:4px;border-radius:1px;background:#EAB839"></div>
<div class="t" style="left:226.2px;top:601.6px;font-size:13.0px;line-height:19px;color:#ccccdc;letter-spacing:0.3px;-webkit-text-stroke:0.15px #ccccdc;">sdc-w</div>
<div class="t" style="left:279.6px;top:601.6px;font-size:13.0px;line-height:19px;color:#ccccdc;letter-spacing:0.3px;-webkit-text-stroke:0.15px #ccccdc;">Avg: 0.804</div>
<div style="position:absolute;left:359.5px;top:609.9px;width:15px;height:4px;border-radius:1px;background:#6ED0E0"></div>
<div class="t" style="left:389.2px;top:601.6px;font-size:13.0px;line-height:19px;color:#ccccdc;letter-spacing:0.3px;-webkit-text-stroke:0.15px #ccccdc;">sdd-w</div>
<div class="t" style="left:443.3px;top:601.6px;font-size:13.0px;line-height:19px;color:#ccccdc;letter-spacing:0.3px;-webkit-text-stroke:0.15px #ccccdc;">Avg: 0.939</div>
<div style="position:absolute;left:32px;top:633.5px;width:15px;height:4px;border-radius:1px;background:#EF843C"></div>
<div class="t" style="left:62.5px;top:625.2px;font-size:13.0px;line-height:19px;color:#ccccdc;letter-spacing:0.3px;-webkit-text-stroke:0.15px #ccccdc;">sde-w</div>
<div class="t" style="left:115.9px;top:625.2px;font-size:13.0px;line-height:19px;color:#ccccdc;letter-spacing:0.3px;-webkit-text-stroke:0.15px #ccccdc;">Avg: 0.907</div>
<div style="position:absolute;left:194.8px;top:633.5px;width:15px;height:4px;border-radius:1px;background:#E24D42"></div>
<div class="t" style="left:225.2px;top:625.2px;font-size:13.0px;line-height:19px;color:#ccccdc;letter-spacing:0.3px;-webkit-text-stroke:0.15px #ccccdc;">sdf-w</div>
<div class="t" style="left:275.4px;top:625.2px;font-size:13.0px;line-height:19px;color:#ccccdc;letter-spacing:0.3px;-webkit-text-stroke:0.15px #ccccdc;">Avg: 0.843</div>
<div style="position:absolute;left:355.2px;top:633.5px;width:15px;height:4px;border-radius:1px;background:#1F78C1"></div>
<div class="t" style="left:385.6px;top:625.2px;font-size:13.0px;line-height:19px;color:#ccccdc;letter-spacing:0.3px;-webkit-text-stroke:0.15px #ccccdc;">sdb-r</div>
<div class="t" style="left:433.6px;top:625.2px;font-size:13.0px;line-height:19px;color:#ccccdc;letter-spacing:0.3px;-webkit-text-stroke:0.15px #ccccdc;">Avg: 41.0</div>
<div style="position:absolute;left:32px;top:656.2px;width:15px;height:4px;border-radius:1px;background:#BA43A9"></div>
<div class="t" style="left:62.5px;top:647.9px;font-size:13.0px;line-height:19px;color:#ccccdc;letter-spacing:0.3px;-webkit-text-stroke:0.15px #ccccdc;">sdc-r</div>
<div class="t" style="left:110.1px;top:647.9px;font-size:13.0px;line-height:19px;color:#ccccdc;letter-spacing:0.3px;-webkit-text-stroke:0.15px #ccccdc;">Avg: 41.5</div>
<div style="position:absolute;left:178.6px;top:656.2px;width:15px;height:4px;border-radius:1px;background:#705DA0"></div>
<div class="t" style="left:209.0px;top:647.9px;font-size:13.0px;line-height:19px;color:#ccccdc;letter-spacing:0.3px;-webkit-text-stroke:0.15px #ccccdc;">sdd-r</div>
<div class="t" style="left:257.6px;top:647.9px;font-size:13.0px;line-height:19px;color:#ccccdc;letter-spacing:0.3px;-webkit-text-stroke:0.15px #ccccdc;">Avg: 41.1</div>
<div style="position:absolute;left:323.2px;top:656.2px;width:15px;height:4px;border-radius:1px;background:#508642"></div>
<div class="t" style="left:353.6px;top:647.9px;font-size:13.0px;line-height:19px;color:#ccccdc;letter-spacing:0.3px;-webkit-text-stroke:0.15px #ccccdc;">sde-r</div>
<div class="t" style="left:401.2px;top:647.9px;font-size:13.0px;line-height:19px;color:#ccccdc;letter-spacing:0.3px;-webkit-text-stroke:0.15px #ccccdc;">Avg: 41.2</div>
<div style="position:absolute;left:470.3px;top:656.2px;width:15px;height:4px;border-radius:1px;background:#CCA300"></div>
<div class="t" style="left:500.1px;top:647.9px;font-size:13.0px;line-height:19px;color:#ccccdc;letter-spacing:0.3px;-webkit-text-stroke:0.15px #ccccdc;">sdf-r</div>
<div class="t" style="left:544.8px;top:647.9px;font-size:13.0px;line-height:19px;color:#ccccdc;letter-spacing:0.3px;-webkit-text-stroke:0.15px #ccccdc;">Avg: 41.7</div>
<div style="position:absolute;left:622px;top:400px;width:601px;height:284px;box-sizing:border-box;background:#181b1f;border:1px solid #24262b;border-radius:3px"></div>
<div class="t c" style="left:622.6px;width:600px;top:406.5px;font-size:16.3px;line-height:23px;color:#ccccdc;letter-spacing:0.25px;-webkit-text-stroke:0.2px #ccccdc;">Per Disk BW read</div>
<svg style="position:absolute;left:0;top:0" width="1851" height="983" viewBox="0 0 1851 983"><line x1="700.1" y1="456.5" x2="1185.4" y2="456.5" stroke="rgba(200,200,200,0.22)" stroke-width="1.1"/><line x1="700.1" y1="484.2" x2="1185.4" y2="484.2" stroke="rgba(200,200,200,0.22)" stroke-width="1.1"/><line x1="700.1" y1="511.9" x2="1185.4" y2="511.9" stroke="rgba(200,200,200,0.22)" stroke-width="1.1"/><line x1="700.1" y1="540.9" x2="1185.4" y2="540.9" stroke="rgba(200,200,200,0.22)" stroke-width="1.1"/><line x1="700.1" y1="568.6" x2="1185.4" y2="568.6" stroke="rgba(200,200,200,0.22)" stroke-width="1.1"/><line x1="777.7" y1="456.5" x2="777.7" y2="568.6" stroke="rgba(200,200,200,0.22)" stroke-width="1.1"/><line x1="863.7" y1="456.5" x2="863.7" y2="568.6" stroke="rgba(200,200,200,0.22)" stroke-width="1.1"/><line x1="949.7" y1="456.5" x2="949.7" y2="568.6" stroke="rgba(200,200,200,0.22)" stroke-width="1.1"/><line x1="1035.6" y1="456.5" x2="1035.6" y2="568.6" stroke="rgba(200,200,200,0.22)" stroke-width="1.1"/><line x1="1121.6" y1="456.5" x2="1121.6" y2="568.6" stroke="rgba(200,200,200,0.22)" stroke-width="1.1"/><polygon points="700.10,568.60 700.10,467.71 777.70,471.63 863.70,475.56 949.70,473.88 1035.60,475.56 1121.60,473.88 1121.60,568.60" fill="#C15C17" fill-opacity="0.1" stroke="none"/><polygon points="700.10,568.60 700.10,559.40 777.70,559.19 863.70,559.29 949.70,559.40 1035.60,559.29 1121.60,559.19 1121.60,568.60" fill="#7EB26D" fill-opacity="0.1" stroke="none"/><polygon points="700.10,568.60 700.10,559.29 777.70,559.40 863.70,559.51 949.70,559.29 1035.60,559.40 1121.60,559.08 1121.60,568.60" fill="#EAB839" fill-opacity="0.1" stroke="none"/><polygon points="700.10,568.60 700.10,559.02 777.70,558.97 863.70,559.19 949.70,559.08 1035.60,559.02 1121.60,558.97 1121.60,568.60" fill="#6ED0E0" fill-opacity="0.1" stroke="none"/><polygon points="700.10,568.60 700.10,559.51 777.70,559.51 863.70,559.40 949.70,559.51 1035.60,559.51 1121.60,559.40 1121.60,568.60" fill="#EF843C" fill-opacity="0.1" stroke="none"/><polygon points="700.10,568.60 700.10,559.40 777.70,559.40 863.70,559.29 949.70,559.40 1035.60,559.35 1121.60,559.29 1121.60,568.60" fill="#E24D42" fill-opacity="0.1" stroke="none"/><polygon points="700.10,568.60 700.10,558.86 777.70,558.75 863.70,558.97 949.70,558.86 1035.60,558.91 1121.60,558.86 1121.60,568.60" fill="#1F78C1" fill-opacity="0.1" stroke="none"/><polygon points="700.10,568.60 700.10,559.29 777.70,559.19 863.70,559.29 949.70,559.24 1035.60,559.19 1121.60,559.19 1121.60,568.60" fill="#705DA0" fill-opacity="0.1" stroke="none"/><polygon points="700.10,568.60 700.10,559.40 777.70,559.40 863.70,559.40 949.70,559.40 1035.60,559.40 1121.60,559.29 1121.60,568.60" fill="#508642" fill-opacity="0.1" stroke="none"/><polygon points="700.10,568.60 700.10,559.40 777.70,559.29 863.70,559.40 949.70,559.35 1035.60,559.29 1121.60,559.24 1121.60,568.60" fill="#CCA300" fill-opacity="0.1" stroke="none"/><polygon points="700.10,568.60 700.10,559.19 777.70,559.08 863.70,559.29 949.70,559.19 1035.60,559.13 1121.60,559.08 1121.60,568.60" fill="#447EBC" fill-opacity="0.1" stroke="none"/><polygon points="700.10,568.60 700.10,560.94 777.70,568.16 863.70,568.33 949.70,568.33 1035.60,568.33 1121.60,568.33 1121.60,568.60" fill="#BA43A9" fill-opacity="0.1" stroke="none"/><polyline points="700.10,467.71 777.70,471.63 863.70,475.56 949.70,473.88 1035.60,475.56 1121.60,473.88" fill="none" stroke="#C15C17" stroke-width="1.15" stroke-linejoin="round"/><polyline points="700.10,559.40 777.70,559.19 863.70,559.29 949.70,559.40 1035.60,559.29 1121.60,559.19" fill="none" stroke="#7EB26D" stroke-width="1.15" stroke-linejoin="round"/><polyline points="700.10,559.29 777.70,559.40 863.70,559.51 949.70,559.29 1035.60,559.40 1121.60,559.08" fill="none" stroke="#EAB839" stroke-width="1.15" stroke-linejoin="round"/><polyline points="700.10,559.02 777.70,558.97 863.70,559.19 949.70,559.08 1035.60,559.02 1121.60,558.97" fill="none" stroke="#6ED0E0" stroke-width="1.15" stroke-linejoin="round"/><polyline points="700.10,559.51 777.70,559.51 863.70,559.40 949.70,559.51 1035.60,559.51 1121.60,559.40" fill="none" stroke="#EF843C" stroke-width="1.15" stroke-linejoin="round"/><polyline points="700.10,559.40 777.70,559.40 863.70,559.29 949.70,559.40 1035.60,559.35 1121.60,559.29" fill="none" stroke="#E24D42" stroke-width="1.15" stroke-linejoin="round"/><polyline points="700.10,558.86 777.70,558.75 863.70,558.97 949.70,558.86 1035.60,558.91 1121.60,558.86" fill="none" stroke="#1F78C1" stroke-width="1.15" stroke-linejoin="round"/><polyline points="700.10,559.29 777.70,559.19 863.70,559.29 949.70,559.24 1035.60,559.19 1121.60,559.19" fill="none" stroke="#705DA0" stroke-width="1.15" stroke-linejoin="round"/><polyline points="700.10,559.40 777.70,559.40 863.70,559.40 949.70,559.40 1035.60,559.40 1121.60,559.29" fill="none" stroke="#508642" stroke-width="1.15" stroke-linejoin="round"/><polyline points="700.10,559.40 777.70,559.29 863.70,559.40 949.70,559.35 1035.60,559.29 1121.60,559.24" fill="none" stroke="#CCA300" stroke-width="1.15" stroke-linejoin="round"/><polyline points="700.10,559.19 777.70,559.08 863.70,559.29 949.70,559.19 1035.60,559.13 1121.60,559.08" fill="none" stroke="#447EBC" stroke-width="1.15" stroke-linejoin="round"/><polyline points="700.10,560.94 777.70,568.16 863.70,568.33 949.70,568.33 1035.60,568.33 1121.60,568.33" fill="none" stroke="#BA43A9" stroke-width="1.15" stroke-linejoin="round"/></svg>
<div class="t" style="right:1157.3px;top:446.9px;font-size:12.6px;line-height:18px;color:#c7c7d1;letter-spacing:0.6px;-webkit-text-stroke:0.05px #c7c7d1;">2 MB/s</div>
<div class="t" style="right:1157.3px;top:474.6px;font-size:12.6px;line-height:18px;color:#c7c7d1;letter-spacing:0.6px;-webkit-text-stroke:0.05px #c7c7d1;">1.50 MB/s</div>
<div class="t" style="right:1157.3px;top:502.3px;font-size:12.6px;line-height:18px;color:#c7c7d1;letter-spacing:0.6px;-webkit-text-stroke:0.05px #c7c7d1;">1 MB/s</div>
<div class="t" style="right:1157.3px;top:531.3px;font-size:12.6px;line-height:18px;color:#c7c7d1;letter-spacing:0.6px;-webkit-text-stroke:0.05px #c7c7d1;">500 kB/s</div>
<div class="t" style="right:1157.3px;top:559.0px;font-size:12.6px;line-height:18px;color:#c7c7d1;letter-spacing:0.6px;-webkit-text-stroke:0.05px #c7c7d1;">0 kB/s</div>
<div class="t c" style="left:478.0px;width:600px;top:573.7px;font-size:12.6px;line-height:18px;color:#c7c7d1;letter-spacing:0.6px;-webkit-text-stroke:0.05px #c7c7d1;">12:38:10</div>
<div class="t c" style="left:564.0px;width:600px;top:573.7px;font-size:12.6px;line-height:18px;color:#c7c7d1;letter-spacing:0.6px;-webkit-text-stroke:0.05px #c7c7d1;">12:38:20</div>
<div class="t c" style="left:650.0px;width:600px;top:573.7px;font-size:12.6px;line-height:18px;color:#c7c7d1;letter-spacing:0.6px;-webkit-text-stroke:0.05px #c7c7d1;">12:38:30</div>
<div class="t c" style="left:735.9px;width:600px;top:573.7px;font-size:12.6px;line-height:18px;color:#c7c7d1;letter-spacing:0.6px;-webkit-text-stroke:0.05px #c7c7d1;">12:38:40</div>
<div class="t c" style="left:821.9px;width:600px;top:573.7px;font-size:12.6px;line-height:18px;color:#c7c7d1;letter-spacing:0.6px;-webkit-text-stroke:0.05px #c7c7d1;">12:38:50</div>
<div style="position:absolute;left:643px;top:609.9px;width:15px;height:4px;border-radius:1px;background:#7EB26D"></div>
<div class="t" style="left:673.5px;top:601.6px;font-size:13.0px;line-height:19px;color:#ccccdc;letter-spacing:0.3px;-webkit-text-stroke:0.15px #ccccdc;">sdb</div>
<div class="t" style="left:710.7px;top:601.6px;font-size:13.0px;line-height:19px;color:#ccccdc;letter-spacing:0.3px;-webkit-text-stroke:0.15px #ccccdc;">Avg: 164 kB/s</div>
<div style="position:absolute;left:808.4px;top:609.9px;width:15px;height:4px;border-radius:1px;background:#EAB839"></div>
<div class="t" style="left:838.8px;top:601.6px;font-size:13.0px;line-height:19px;color:#ccccdc;letter-spacing:0.3px;-webkit-text-stroke:0.15px #ccccdc;">sdc</div>
<div class="t" style="left:875.1px;top:601.6px;font-size:13.0px;line-height:19px;color:#ccccdc;letter-spacing:0.3px;-webkit-text-stroke:0.15px #ccccdc;">Avg: 166 kB/s</div>
<div style="position:absolute;left:972px;top:609.9px;width:15px;height:4px;border-radius:1px;background:#6ED0E0"></div>
<div class="t" style="left:1003.1px;top:601.6px;font-size:13.0px;line-height:19px;color:#ccccdc;letter-spacing:0.3px;-webkit-text-stroke:0.15px #ccccdc;">sdd</div>
<div class="t" style="left:1039.8px;top:601.6px;font-size:13.0px;line-height:19px;color:#ccccdc;letter-spacing:0.3px;-webkit-text-stroke:0.15px #ccccdc;">Avg: 165 kB/s</div>
<div style="position:absolute;left:643px;top:633.5px;width:15px;height:4px;border-radius:1px;background:#EF843C"></div>
<div class="t" style="left:673.5px;top:625.2px;font-size:13.0px;line-height:19px;color:#ccccdc;letter-spacing:0.3px;-webkit-text-stroke:0.15px #ccccdc;">sde</div>
<div class="t" style="left:710.1px;top:625.2px;font-size:13.0px;line-height:19px;color:#ccccdc;letter-spacing:0.3px;-webkit-text-stroke:0.15px #ccccdc;">Avg: 165 kB/s</div>
<div style="position:absolute;left:806.8px;top:633.5px;width:15px;height:4px;border-radius:1px;background:#E24D42"></div>
<div class="t" style="left:837.8px;top:625.2px;font-size:13.0px;line-height:19px;color:#ccccdc;letter-spacing:0.3px;-webkit-text-stroke:0.15px #ccccdc;">sdf</div>
<div class="t" style="left:871.2px;top:625.2px;font-size:13.0px;line-height:19px;color:#ccccdc;letter-spacing:0.3px;-webkit-text-stroke:0.15px #ccccdc;">Avg: 167 kB/s</div>
<div style="position:absolute;left:968.2px;top:633.5px;width:15px;height:4px;border-radius:1px;background:#1F78C1"></div>
<div class="t" style="left:998.6px;top:625.2px;font-size:13.0px;line-height:19px;color:#ccccdc;letter-spacing:0.3px;-webkit-text-stroke:0.15px #ccccdc;">sdg</div>
<div class="t" style="left:1035.6px;top:625.2px;font-size:13.0px;line-height:19px;color:#ccccdc;letter-spacing:0.3px;-webkit-text-stroke:0.15px #ccccdc;">Avg: 171 kB/s</div>
<div style="position:absolute;left:643px;top:656.2px;width:15px;height:4px;border-radius:1px;background:#BA43A9"></div>
<div class="t" style="left:673.5px;top:647.9px;font-size:13.0px;line-height:19px;color:#ccccdc;letter-spacing:0.3px;-webkit-text-stroke:0.15px #ccccdc;">sdh</div>
<div class="t" style="left:710.1px;top:647.9px;font-size:13.0px;line-height:19px;color:#ccccdc;letter-spacing:0.3px;-webkit-text-stroke:0.15px #ccccdc;">Avg: 30.6 kB/s</div>
<div style="position:absolute;left:813.2px;top:656.2px;width:15px;height:4px;border-radius:1px;background:#705DA0"></div>
<div class="t" style="left:843.6px;top:647.9px;font-size:13.0px;line-height:19px;color:#ccccdc;letter-spacing:0.3px;-webkit-text-stroke:0.15px #ccccdc;">sdi</div>
<div class="t" style="left:875.1px;top:647.9px;font-size:13.0px;line-height:19px;color:#ccccdc;letter-spacing:0.3px;-webkit-text-stroke:0.15px #ccccdc;">Avg: 169 kB/s</div>
<div style="position:absolute;left:973px;top:656.2px;width:15px;height:4px;border-radius:1px;background:#508642"></div>
<div class="t" style="left:1003.4px;top:647.9px;font-size:13.0px;line-height:19px;color:#ccccdc;letter-spacing:0.3px;-webkit-text-stroke:0.15px #ccccdc;">sdj</div>
<div class="t" style="left:1035.6px;top:647.9px;font-size:13.0px;line-height:19px;color:#ccccdc;letter-spacing:0.3px;-webkit-text-stroke:0.15px #ccccdc;">Avg: 166 kB/s</div>
<div style="position:absolute;left:1231px;top:400px;width:602px;height:284px;box-sizing:border-box;background:#181b1f;border:1px solid #24262b;border-radius:3px"></div>
<div class="t c" style="left:1232.1px;width:600px;top:406.5px;font-size:16.3px;line-height:23px;color:#ccccdc;letter-spacing:0.25px;-webkit-text-stroke:0.2px #ccccdc;">Per Disk BW write</div>
<svg style="position:absolute;left:0;top:0" width="1851" height="983" viewBox="0 0 1851 983"><line x1="1309.1" y1="456.4" x2="1794.4" y2="456.4" stroke="rgba(200,200,200,0.22)" stroke-width="1.1"/><line x1="1309.1" y1="493.0" x2="1794.4" y2="493.0" stroke="rgba(200,200,200,0.22)" stroke-width="1.1"/><line x1="1309.1" y1="530.9" x2="1794.4" y2="530.9" stroke="rgba(200,200,200,0.22)" stroke-width="1.1"/><line x1="1309.1" y1="568.5" x2="1794.4" y2="568.5" stroke="rgba(200,200,200,0.22)" stroke-width="1.1"/><line x1="1386.7" y1="456.4" x2="1386.7" y2="568.5" stroke="rgba(200,200,200,0.22)" stroke-width="1.1"/><line x1="1472.6" y1="456.4" x2="1472.6" y2="568.5" stroke="rgba(200,200,200,0.22)" stroke-width="1.1"/><line x1="1558.4" y1="456.4" x2="1558.4" y2="568.5" stroke="rgba(200,200,200,0.22)" stroke-width="1.1"/><line x1="1644.2" y1="456.4" x2="1644.2" y2="568.5" stroke="rgba(200,200,200,0.22)" stroke-width="1.1"/><line x1="1730.2" y1="456.4" x2="1730.2" y2="568.5" stroke="rgba(200,200,200,0.22)" stroke-width="1.1"/><polygon points="1309.10,568.50 1309.10,472.54 1386.70,555.05 1472.60,568.50 1558.40,564.24 1644.20,560.28 1730.20,556.92 1730.20,568.50" fill="#C15C17" fill-opacity="0.1" stroke="none"/><polygon points="1309.10,568.50 1309.10,560.47 1386.70,567.04 1472.60,568.14 1558.40,568.14 1644.20,567.92 1730.20,567.41 1730.20,568.50" fill="#7EB26D" fill-opacity="0.1" stroke="none"/><polygon points="1309.10,568.50 1309.10,561.20 1386.70,565.95 1472.60,567.77 1558.40,567.62 1644.20,567.41 1730.20,566.68 1730.20,568.50" fill="#EAB839" fill-opacity="0.1" stroke="none"/><polygon points="1309.10,568.50 1309.10,559.74 1386.70,567.41 1472.60,568.21 1558.40,568.14 1644.20,567.92 1730.20,567.62 1730.20,568.50" fill="#6ED0E0" fill-opacity="0.1" stroke="none"/><polygon points="1309.10,568.50 1309.10,560.11 1386.70,567.04 1472.60,568.14 1558.40,568.06 1644.20,567.92 1730.20,567.48 1730.20,568.50" fill="#EF843C" fill-opacity="0.1" stroke="none"/><polygon points="1309.10,568.50 1309.10,559.89 1386.70,567.19 1472.60,568.14 1558.40,568.06 1644.20,567.84 1730.20,567.55 1730.20,568.50" fill="#E24D42" fill-opacity="0.1" stroke="none"/><polygon points="1309.10,568.50 1309.10,559.38 1386.70,567.62 1472.60,568.28 1558.40,568.21 1644.20,567.92 1730.20,567.62 1730.20,568.50" fill="#1F78C1" fill-opacity="0.1" stroke="none"/><polygon points="1309.10,568.50 1309.10,557.55 1386.70,567.04 1472.60,568.14 1558.40,568.06 1644.20,567.92 1730.20,567.62 1730.20,568.50" fill="#BA43A9" fill-opacity="0.1" stroke="none"/><polygon points="1309.10,568.50 1309.10,558.65 1386.70,567.41 1472.60,568.21 1558.40,568.14 1644.20,567.99 1730.20,567.77 1730.20,568.50" fill="#705DA0" fill-opacity="0.1" stroke="none"/><polygon points="1309.10,568.50 1309.10,560.47 1386.70,567.19 1472.60,568.14 1558.40,568.06 1644.20,567.84 1730.20,567.55 1730.20,568.50" fill="#508642" fill-opacity="0.1" stroke="none"/><polygon points="1309.10,568.50 1309.10,560.84 1386.70,566.89 1472.60,568.06 1558.40,567.99 1644.20,567.77 1730.20,567.33 1730.20,568.50" fill="#CCA300" fill-opacity="0.1" stroke="none"/><polygon points="1309.10,568.50 1309.10,560.33 1386.70,567.33 1472.60,568.21 1558.40,568.06 1644.20,567.92 1730.20,567.62 1730.20,568.50" fill="#447EBC" fill-opacity="0.1" stroke="none"/><polyline points="1309.10,472.54 1386.70,555.05 1472.60,568.50 1558.40,564.24 1644.20,560.28 1730.20,556.92" fill="none" stroke="#C15C17" stroke-width="1.15" stroke-linejoin="round"/><polyline points="1309.10,560.47 1386.70,567.04 1472.60,568.14 1558.40,568.14 1644.20,567.92 1730.20,567.41" fill="none" stroke="#7EB26D" stroke-width="1.15" stroke-linejoin="round"/><polyline points="1309.10,561.20 1386.70,565.95 1472.60,567.77 1558.40,567.62 1644.20,567.41 1730.20,566.68" fill="none" stroke="#EAB839" stroke-width="1.15" stroke-linejoin="round"/><polyline points="1309.10,559.74 1386.70,567.41 1472.60,568.21 1558.40,568.14 1644.20,567.92 1730.20,567.62" fill="none" stroke="#6ED0E0" stroke-width="1.15" stroke-linejoin="round"/><polyline points="1309.10,560.11 1386.70,567.04 1472.60,568.14 1558.40,568.06 1644.20,567.92 1730.20,567.48" fill="none" stroke="#EF843C" stroke-width="1.15" stroke-linejoin="round"/><polyline points="1309.10,559.89 1386.70,567.19 1472.60,568.14 1558.40,568.06 1644.20,567.84 1730.20,567.55" fill="none" stroke="#E24D42" stroke-width="1.15" stroke-linejoin="round"/><polyline points="1309.10,559.38 1386.70,567.62 1472.60,568.28 1558.40,568.21 1644.20,567.92 1730.20,567.62" fill="none" stroke="#1F78C1" stroke-width="1.15" stroke-linejoin="round"/><polyline points="1309.10,557.55 1386.70,567.04 1472.60,568.14 1558.40,568.06 1644.20,567.92 1730.20,567.62" fill="none" stroke="#BA43A9" stroke-width="1.15" stroke-linejoin="round"/><polyline points="1309.10,558.65 1386.70,567.41 1472.60,568.21 1558.40,568.14 1644.20,567.99 1730.20,567.77" fill="none" stroke="#705DA0" stroke-width="1.15" stroke-linejoin="round"/><polyline points="1309.10,560.47 1386.70,567.19 1472.60,568.14 1558.40,568.06 1644.20,567.84 1730.20,567.55" fill="none" stroke="#508642" stroke-width="1.15" stroke-linejoin="round"/><polyline points="1309.10,560.84 1386.70,566.89 1472.60,568.06 1558.40,567.99 1644.20,567.77 1730.20,567.33" fill="none" stroke="#CCA300" stroke-width="1.15" stroke-linejoin="round"/><polyline points="1309.10,560.33 1386.70,567.33 1472.60,568.21 1558.40,568.06 1644.20,567.92 1730.20,567.62" fill="none" stroke="#447EBC" stroke-width="1.15" stroke-linejoin="round"/></svg>
<div class="t" style="right:548.3px;top:446.8px;font-size:12.6px;line-height:18px;color:#c7c7d1;letter-spacing:0.6px;-webkit-text-stroke:0.05px #c7c7d1;">1.50 MB/s</div>
<div class="t" style="right:548.3px;top:483.4px;font-size:12.6px;line-height:18px;color:#c7c7d1;letter-spacing:0.6px;-webkit-text-stroke:0.05px #c7c7d1;">1 MB/s</div>
<div class="t" style="right:548.3px;top:521.3px;font-size:12.6px;line-height:18px;color:#c7c7d1;letter-spacing:0.6px;-webkit-text-stroke:0.05px #c7c7d1;">500 kB/s</div>
<div class="t" style="right:548.3px;top:558.9px;font-size:12.6px;line-height:18px;color:#c7c7d1;letter-spacing:0.6px;-webkit-text-stroke:0.05px #c7c7d1;">0 kB/s</div>
<div class="t c" style="left:1087.0px;width:600px;top:573.5px;font-size:12.6px;line-height:18px;color:#c7c7d1;letter-spacing:0.6px;-webkit-text-stroke:0.05px #c7c7d1;">12:38:10</div>
<div class="t c" style="left:1172.9px;width:600px;top:573.5px;font-size:12.6px;line-height:18px;color:#c7c7d1;letter-spacing:0.6px;-webkit-text-stroke:0.05px #c7c7d1;">12:38:20</div>
<div class="t c" style="left:1258.7px;width:600px;top:573.5px;font-size:12.6px;line-height:18px;color:#c7c7d1;letter-spacing:0.6px;-webkit-text-stroke:0.05px #c7c7d1;">12:38:30</div>
<div class="t c" style="left:1344.5px;width:600px;top:573.5px;font-size:12.6px;line-height:18px;color:#c7c7d1;letter-spacing:0.6px;-webkit-text-stroke:0.05px #c7c7d1;">12:38:40</div>
<div class="t c" style="left:1430.5px;width:600px;top:573.5px;font-size:12.6px;line-height:18px;color:#c7c7d1;letter-spacing:0.6px;-webkit-text-stroke:0.05px #c7c7d1;">12:38:50</div>
<div style="position:absolute;left:1252px;top:609.9px;width:15px;height:4px;border-radius:1px;background:#7EB26D"></div>
<div class="t" style="left:1282.5px;top:601.6px;font-size:13.0px;line-height:19px;color:#ccccdc;letter-spacing:0.3px;-webkit-text-stroke:0.15px #ccccdc;">sdb</div>
<div class="t" style="left:1319.7px;top:601.6px;font-size:13.0px;line-height:19px;color:#ccccdc;letter-spacing:0.3px;-webkit-text-stroke:0.15px #ccccdc;">Avg: 26.3 kB/s</div>
<div style="position:absolute;left:1422.2px;top:609.9px;width:15px;height:4px;border-radius:1px;background:#EAB839"></div>
<div class="t" style="left:1452.6px;top:601.6px;font-size:13.0px;line-height:19px;color:#ccccdc;letter-spacing:0.3px;-webkit-text-stroke:0.15px #ccccdc;">sdc</div>
<div class="t" style="left:1488.9px;top:601.6px;font-size:13.0px;line-height:19px;color:#ccccdc;letter-spacing:0.3px;-webkit-text-stroke:0.15px #ccccdc;">Avg: 26.6 kB/s</div>
<div style="position:absolute;left:1590.8px;top:609.9px;width:15px;height:4px;border-radius:1px;background:#6ED0E0"></div>
<div class="t" style="left:1621.2px;top:601.6px;font-size:13.0px;line-height:19px;color:#ccccdc;letter-spacing:0.3px;-webkit-text-stroke:0.15px #ccccdc;">sdd</div>
<div class="t" style="left:1658.5px;top:601.6px;font-size:13.0px;line-height:19px;color:#ccccdc;letter-spacing:0.3px;-webkit-text-stroke:0.15px #ccccdc;">Avg: 33.3 kB/s</div>
<div style="position:absolute;left:1252px;top:633.5px;width:15px;height:4px;border-radius:1px;background:#EF843C"></div>
<div class="t" style="left:1282.5px;top:625.2px;font-size:13.0px;line-height:19px;color:#ccccdc;letter-spacing:0.3px;-webkit-text-stroke:0.15px #ccccdc;">sde</div>
<div class="t" style="left:1319.1px;top:625.2px;font-size:13.0px;line-height:19px;color:#ccccdc;letter-spacing:0.3px;-webkit-text-stroke:0.15px #ccccdc;">Avg: 31.5 kB/s</div>
<div style="position:absolute;left:1419px;top:633.5px;width:15px;height:4px;border-radius:1px;background:#E24D42"></div>
<div class="t" style="left:1450.0px;top:625.2px;font-size:13.0px;line-height:19px;color:#ccccdc;letter-spacing:0.3px;-webkit-text-stroke:0.15px #ccccdc;">sdf</div>
<div class="t" style="left:1483.4px;top:625.2px;font-size:13.0px;line-height:19px;color:#ccccdc;letter-spacing:0.3px;-webkit-text-stroke:0.15px #ccccdc;">Avg: 30.3 kB/s</div>
<div style="position:absolute;left:1586.6px;top:633.5px;width:15px;height:4px;border-radius:1px;background:#1F78C1"></div>
<div class="t" style="left:1617.0px;top:625.2px;font-size:13.0px;line-height:19px;color:#ccccdc;letter-spacing:0.3px;-webkit-text-stroke:0.15px #ccccdc;">sdg</div>
<div class="t" style="left:1653.6px;top:625.2px;font-size:13.0px;line-height:19px;color:#ccccdc;letter-spacing:0.3px;-webkit-text-stroke:0.15px #ccccdc;">Avg: 29.9 kB/s</div>
<div style="position:absolute;left:1252px;top:656.2px;width:15px;height:4px;border-radius:1px;background:#BA43A9"></div>
<div class="t" style="left:1282.5px;top:647.9px;font-size:13.0px;line-height:19px;color:#ccccdc;letter-spacing:0.3px;-webkit-text-stroke:0.15px #ccccdc;">sdh</div>
<div class="t" style="left:1319.1px;top:647.9px;font-size:13.0px;line-height:19px;color:#ccccdc;letter-spacing:0.3px;-webkit-text-stroke:0.15px #ccccdc;">Avg: 30.6 kB/s</div>
<div style="position:absolute;left:1422.2px;top:656.2px;width:15px;height:4px;border-radius:1px;background:#705DA0"></div>
<div class="t" style="left:1452.6px;top:647.9px;font-size:13.0px;line-height:19px;color:#ccccdc;letter-spacing:0.3px;-webkit-text-stroke:0.15px #ccccdc;">sdi</div>
<div class="t" style="left:1484.1px;top:647.9px;font-size:13.0px;line-height:19px;color:#ccccdc;letter-spacing:0.3px;-webkit-text-stroke:0.15px #ccccdc;">Avg: 24.8 kB/s</div>
<div style="position:absolute;left:1586.6px;top:656.2px;width:15px;height:4px;border-radius:1px;background:#508642"></div>
<div class="t" style="left:1617.0px;top:647.9px;font-size:13.0px;line-height:19px;color:#ccccdc;letter-spacing:0.3px;-webkit-text-stroke:0.15px #ccccdc;">sdj</div>
<div class="t" style="left:1648.8px;top:647.9px;font-size:13.0px;line-height:19px;color:#ccccdc;letter-spacing:0.3px;-webkit-text-stroke:0.15px #ccccdc;">Avg: 28.5 kB/s</div>
<div style="position:absolute;left:11px;top:693px;width:602px;height:283px;box-sizing:border-box;background:#181b1f;border:1px solid #24262b;border-radius:3px"></div>
<div class="t c" style="left:12.1px;width:600px;top:699.5px;font-size:16.3px;line-height:23px;color:#ccccdc;letter-spacing:0.25px;-webkit-text-stroke:0.2px #ccccdc;">PUT Account/Container/Object</div>
<svg style="position:absolute;left:0;top:0" width="1851" height="983" viewBox="0 0 1851 983"><line x1="69.0" y1="749.5" x2="574.8" y2="749.5" stroke="rgba(200,200,200,0.22)" stroke-width="1.1"/><line x1="69.0" y1="783.6" x2="574.8" y2="783.6" stroke="rgba(200,200,200,0.22)" stroke-width="1.1"/><line x1="69.0" y1="818.8" x2="574.8" y2="818.8" stroke="rgba(200,200,200,0.22)" stroke-width="1.1"/><line x1="69.0" y1="852.9" x2="574.8" y2="852.9" stroke="rgba(200,200,200,0.22)" stroke-width="1.1"/><line x1="69.0" y1="888.0" x2="574.8" y2="888.0" stroke="rgba(200,200,200,0.22)" stroke-width="1.1"/><line x1="150.5" y1="749.5" x2="150.5" y2="888.0" stroke="rgba(200,200,200,0.22)" stroke-width="1.1"/><line x1="239.7" y1="749.5" x2="239.7" y2="888.0" stroke="rgba(200,200,200,0.22)" stroke-width="1.1"/><line x1="329.0" y1="749.5" x2="329.0" y2="888.0" stroke="rgba(200,200,200,0.22)" stroke-width="1.1"/><line x1="418.6" y1="749.5" x2="418.6" y2="888.0" stroke="rgba(200,200,200,0.22)" stroke-width="1.1"/><line x1="507.5" y1="749.5" x2="507.5" y2="888.0" stroke="rgba(200,200,200,0.22)" stroke-width="1.1"/><polyline points="69.00,818.10 150.50,818.10 239.70,818.10 329.00,818.10 418.60,818.10 507.50,818.10" fill="none" stroke="#7EB26D" stroke-width="1.1" stroke-linejoin="round"/><polyline points="69.00,818.10 150.50,818.10 239.70,818.10 329.00,818.10 418.60,818.10 507.50,818.10" fill="none" stroke="#EAB839" stroke-width="1.1" stroke-linejoin="round"/><polyline points="69.00,818.50 150.50,818.50 239.70,818.50 329.00,818.50 418.60,818.50 507.50,818.50" fill="none" stroke="#6ED0E0" stroke-width="1.1" stroke-linejoin="round"/></svg>
<div class="t" style="right:1788.4px;top:739.9px;font-size:12.6px;line-height:18px;color:#c7c7d1;letter-spacing:0.6px;-webkit-text-stroke:0.05px #c7c7d1;">1</div>
<div class="t" style="right:1788.4px;top:774.0px;font-size:12.6px;line-height:18px;color:#c7c7d1;letter-spacing:0.6px;-webkit-text-stroke:0.05px #c7c7d1;">0.500</div>
<div class="t" style="right:1788.4px;top:809.2px;font-size:12.6px;line-height:18px;color:#c7c7d1;letter-spacing:0.6px;-webkit-text-stroke:0.05px #c7c7d1;">0</div>
<div class="t" style="right:1788.4px;top:843.3px;font-size:12.6px;line-height:18px;color:#c7c7d1;letter-spacing:0.6px;-webkit-text-stroke:0.05px #c7c7d1;">-0.500</div>
<div class="t" style="right:1788.4px;top:878.4px;font-size:12.6px;line-height:18px;color:#c7c7d1;letter-spacing:0.6px;-webkit-text-stroke:0.05px #c7c7d1;">-1</div>
<div class="t c" style="left:-149.2px;width:600px;top:894.5px;font-size:12.6px;line-height:18px;color:#c7c7d1;letter-spacing:0.6px;-webkit-text-stroke:0.05px #c7c7d1;">12:38:10</div>
<div class="t c" style="left:-60.0px;width:600px;top:894.5px;font-size:12.6px;line-height:18px;color:#c7c7d1;letter-spacing:0.6px;-webkit-text-stroke:0.05px #c7c7d1;">12:38:20</div>
<div class="t c" style="left:29.3px;width:600px;top:894.5px;font-size:12.6px;line-height:18px;color:#c7c7d1;letter-spacing:0.6px;-webkit-text-stroke:0.05px #c7c7d1;">12:38:30</div>
<div class="t c" style="left:118.9px;width:600px;top:894.5px;font-size:12.6px;line-height:18px;color:#c7c7d1;letter-spacing:0.6px;-webkit-text-stroke:0.05px #c7c7d1;">12:38:40</div>
<div class="t c" style="left:207.8px;width:600px;top:894.5px;font-size:12.6px;line-height:18px;color:#c7c7d1;letter-spacing:0.6px;-webkit-text-stroke:0.05px #c7c7d1;">12:38:50</div>
<div style="position:absolute;left:32px;top:930.8px;width:15px;height:4px;border-radius:1px;background:#7EB26D"></div>
<div class="t" style="left:62.5px;top:922.5px;font-size:13.0px;line-height:19px;color:#ccccdc;letter-spacing:0.3px;-webkit-text-stroke:0.15px #ccccdc;">put object</div>
<div class="t" style="left:140.3px;top:922.5px;font-size:13.0px;line-height:19px;color:#ccccdc;letter-spacing:0.3px;-webkit-text-stroke:0.15px #ccccdc;">Avg: 0</div>
<div class="t" style="left:187.3px;top:922.5px;font-size:13.0px;line-height:19px;color:#ccccdc;letter-spacing:0.3px;-webkit-text-stroke:0.15px #ccccdc;">Total: 0</div>
<div style="position:absolute;left:245px;top:930.8px;width:15px;height:4px;border-radius:1px;background:#EAB839"></div>
<div class="t" style="left:275.8px;top:922.5px;font-size:13.0px;line-height:19px;color:#ccccdc;letter-spacing:0.3px;-webkit-text-stroke:0.15px #ccccdc;">put container</div>
<div class="t" style="left:373.6px;top:922.5px;font-size:13.0px;line-height:19px;color:#ccccdc;letter-spacing:0.3px;-webkit-text-stroke:0.15px #ccccdc;">Avg: 0</div>
<div class="t" style="left:420.6px;top:922.5px;font-size:13.0px;line-height:19px;color:#ccccdc;letter-spacing:0.3px;-webkit-text-stroke:0.15px #ccccdc;">Total: 0</div>
<div style="position:absolute;left:32px;top:953.5px;width:15px;height:4px;border-radius:1px;background:#6ED0E0"></div>
<div class="t" style="left:62.5px;top:945.2px;font-size:13.0px;line-height:19px;color:#ccccdc;letter-spacing:0.3px;-webkit-text-stroke:0.15px #ccccdc;">put account</div>
<div class="t" style="left:151.6px;top:945.2px;font-size:13.0px;line-height:19px;color:#ccccdc;letter-spacing:0.3px;-webkit-text-stroke:0.15px #ccccdc;">Avg: 0</div>
<div class="t" style="left:198.6px;top:945.2px;font-size:13.0px;line-height:19px;color:#ccccdc;letter-spacing:0.3px;-webkit-text-stroke:0.15px #ccccdc;">Total: 0</div>
<div style="position:absolute;left:622px;top:693px;width:601px;height:283px;box-sizing:border-box;background:#181b1f;border:1px solid #24262b;border-radius:3px"></div>
<div class="t c" style="left:622.6px;width:600px;top:699.5px;font-size:16.3px;line-height:23px;color:#ccccdc;letter-spacing:0.25px;-webkit-text-stroke:0.2px #ccccdc;">GET &amp; HEAD Account/Container/Object</div>
<svg style="position:absolute;left:0;top:0" width="1851" height="983" viewBox="0 0 1851 983"><line x1="679.0" y1="749.5" x2="1185.8" y2="749.5" stroke="rgba(200,200,200,0.22)" stroke-width="1.1"/><line x1="679.0" y1="777.0" x2="1185.8" y2="777.0" stroke="rgba(200,200,200,0.22)" stroke-width="1.1"/><line x1="679.0" y1="804.5" x2="1185.8" y2="804.5" stroke="rgba(200,200,200,0.22)" stroke-width="1.1"/><line x1="679.0" y1="831.9" x2="1185.8" y2="831.9" stroke="rgba(200,200,200,0.22)" stroke-width="1.1"/><line x1="679.0" y1="859.4" x2="1185.8" y2="859.4" stroke="rgba(200,200,200,0.22)" stroke-width="1.1"/><line x1="679.0" y1="888.1" x2="1185.8" y2="888.1" stroke="rgba(200,200,200,0.22)" stroke-width="1.1"/><line x1="760.4" y1="749.5" x2="760.4" y2="888.1" stroke="rgba(200,200,200,0.22)" stroke-width="1.1"/><line x1="849.9" y1="749.5" x2="849.9" y2="888.1" stroke="rgba(200,200,200,0.22)" stroke-width="1.1"/><line x1="939.5" y1="749.5" x2="939.5" y2="888.1" stroke="rgba(200,200,200,0.22)" stroke-width="1.1"/><line x1="1028.6" y1="749.5" x2="1028.6" y2="888.1" stroke="rgba(200,200,200,0.22)" stroke-width="1.1"/><line x1="1118.5" y1="749.5" x2="1118.5" y2="888.1" stroke="rgba(200,200,200,0.22)" stroke-width="1.1"/><polygon points="679.00,888.10 679.00,802.68 760.40,774.15 849.90,777.75 939.50,776.65 1028.60,778.86 1118.50,805.45 1118.50,888.10" fill="#7EB26D" fill-opacity="0.1" stroke="none"/><polygon points="679.00,888.10 679.00,887.94 760.40,887.94 849.90,887.94 939.50,887.94 1028.60,887.94 1118.50,887.94 1118.50,888.10" fill="#EAB839" fill-opacity="0.1" stroke="none"/><polygon points="679.00,888.10 679.00,887.98 760.40,887.98 849.90,887.98 939.50,887.98 1028.60,887.98 1118.50,887.98 1118.50,888.10" fill="#6ED0E0" fill-opacity="0.1" stroke="none"/><polyline points="679.00,802.68 760.40,774.15 849.90,777.75 939.50,776.65 1028.60,778.86 1118.50,805.45" fill="none" stroke="#7EB26D" stroke-width="1.15" stroke-linejoin="round"/><polyline points="679.00,887.94 760.40,887.94 849.90,887.94 939.50,887.94 1028.60,887.94 1118.50,887.94" fill="none" stroke="#EAB839" stroke-width="1.15" stroke-linejoin="round"/><polyline points="679.00,887.98 760.40,887.98 849.90,887.98 939.50,887.98 1028.60,887.98 1118.50,887.98" fill="none" stroke="#6ED0E0" stroke-width="1.6" stroke-linejoin="round"/></svg>
<div class="t" style="right:1178.4px;top:739.9px;font-size:12.6px;line-height:18px;color:#c7c7d1;letter-spacing:0.6px;-webkit-text-stroke:0.05px #c7c7d1;">2.50 K</div>
<div class="t" style="right:1178.4px;top:767.4px;font-size:12.6px;line-height:18px;color:#c7c7d1;letter-spacing:0.6px;-webkit-text-stroke:0.05px #c7c7d1;">2 K</div>
<div class="t" style="right:1178.4px;top:794.9px;font-size:12.6px;line-height:18px;color:#c7c7d1;letter-spacing:0.6px;-webkit-text-stroke:0.05px #c7c7d1;">1.50 K</div>
<div class="t" style="right:1178.4px;top:822.3px;font-size:12.6px;line-height:18px;color:#c7c7d1;letter-spacing:0.6px;-webkit-text-stroke:0.05px #c7c7d1;">1 K</div>
<div class="t" style="right:1178.4px;top:849.8px;font-size:12.6px;line-height:18px;color:#c7c7d1;letter-spacing:0.6px;-webkit-text-stroke:0.05px #c7c7d1;">500</div>
<div class="t" style="right:1178.4px;top:878.5px;font-size:12.6px;line-height:18px;color:#c7c7d1;letter-spacing:0.6px;-webkit-text-stroke:0.05px #c7c7d1;">0</div>
<div class="t c" style="left:460.7px;width:600px;top:894.5px;font-size:12.6px;line-height:18px;color:#c7c7d1;letter-spacing:0.6px;-webkit-text-stroke:0.05px #c7c7d1;">12:38:10</div>
<div class="t c" style="left:550.2px;width:600px;top:894.5px;font-size:12.6px;line-height:18px;color:#c7c7d1;letter-spacing:0.6px;-webkit-text-stroke:0.05px #c7c7d1;">12:38:20</div>
<div class="t c" style="left:639.8px;width:600px;top:894.5px;font-size:12.6px;line-height:18px;color:#c7c7d1;letter-spacing:0.6px;-webkit-text-stroke:0.05px #c7c7d1;">12:38:30</div>
<div class="t c" style="left:728.9px;width:600px;top:894.5px;font-size:12.6px;line-height:18px;color:#c7c7d1;letter-spacing:0.6px;-webkit-text-stroke:0.05px #c7c7d1;">12:38:40</div>
<div class="t c" style="left:818.8px;width:600px;top:894.5px;font-size:12.6px;line-height:18px;color:#c7c7d1;letter-spacing:0.6px;-webkit-text-stroke:0.05px #c7c7d1;">12:38:50</div>
<div style="position:absolute;left:643px;top:930.8px;width:15px;height:4px;border-radius:1px;background:#7EB26D"></div>
<div class="t" style="left:673.5px;top:922.5px;font-size:13.0px;line-height:19px;color:#ccccdc;letter-spacing:0.3px;-webkit-text-stroke:0.15px #ccccdc;">get object</div>
<div class="t" style="left:751.3px;top:922.5px;font-size:13.0px;line-height:19px;color:#ccccdc;letter-spacing:0.3px;-webkit-text-stroke:0.15px #ccccdc;">Avg: 1.83 K</div>
<div class="t" style="left:828.4px;top:922.5px;font-size:13.0px;line-height:19px;color:#ccccdc;letter-spacing:0.3px;-webkit-text-stroke:0.15px #ccccdc;">Total: 11.0 K</div>
<div style="position:absolute;left:915.4px;top:930.8px;width:15px;height:4px;border-radius:1px;background:#EAB839"></div>
<div class="t" style="left:945.1px;top:922.5px;font-size:13.0px;line-height:19px;color:#ccccdc;letter-spacing:0.3px;-webkit-text-stroke:0.15px #ccccdc;">head account</div>
<div class="t" style="left:1045.6px;top:922.5px;font-size:13.0px;line-height:19px;color:#ccccdc;letter-spacing:0.3px;-webkit-text-stroke:0.15px #ccccdc;">Avg: 1.03</div>
<div class="t" style="left:1109.4px;top:922.5px;font-size:13.0px;line-height:19px;color:#ccccdc;letter-spacing:0.3px;-webkit-text-stroke:0.15px #ccccdc;">Total: 6.20</div>
<div style="position:absolute;left:643px;top:953.5px;width:15px;height:4px;border-radius:1px;background:#6ED0E0"></div>
<div class="t" style="left:673.5px;top:945.2px;font-size:13.0px;line-height:19px;color:#ccccdc;letter-spacing:0.3px;-webkit-text-stroke:0.15px #ccccdc;">head container</div>
<div class="t" style="left:782.1px;top:945.2px;font-size:13.0px;line-height:19px;color:#ccccdc;letter-spacing:0.3px;-webkit-text-stroke:0.15px #ccccdc;">Avg: 0.275</div>
<div class="t" style="left:856.0px;top:945.2px;font-size:13.0px;line-height:19px;color:#ccccdc;letter-spacing:0.3px;-webkit-text-stroke:0.15px #ccccdc;">Total: 1.65</div>
<div style="position:absolute;left:1231px;top:693px;width:602px;height:283px;box-sizing:border-box;background:#181b1f;border:1px solid #24262b;border-radius:3px"></div>
<div class="t c" style="left:1232.1px;width:600px;top:699.5px;font-size:16.3px;line-height:23px;color:#ccccdc;letter-spacing:0.25px;-webkit-text-stroke:0.2px #ccccdc;">DELETE Container/Object</div>
<svg style="position:absolute;left:0;top:0" width="1851" height="983" viewBox="0 0 1851 983"><line x1="1289.6" y1="749.5" x2="1794.8" y2="749.5" stroke="rgba(200,200,200,0.22)" stroke-width="1.1"/><line x1="1289.6" y1="789.1" x2="1794.8" y2="789.1" stroke="rgba(200,200,200,0.22)" stroke-width="1.1"/><line x1="1289.6" y1="829.8" x2="1794.8" y2="829.8" stroke="rgba(200,200,200,0.22)" stroke-width="1.1"/><line x1="1289.6" y1="870.5" x2="1794.8" y2="870.5" stroke="rgba(200,200,200,0.22)" stroke-width="1.1"/><line x1="1289.6" y1="911.2" x2="1794.8" y2="911.2" stroke="rgba(200,200,200,0.22)" stroke-width="1.1"/><line x1="1370.6" y1="749.5" x2="1370.6" y2="911.2" stroke="rgba(200,200,200,0.22)" stroke-width="1.1"/><line x1="1459.0" y1="749.5" x2="1459.0" y2="911.2" stroke="rgba(200,200,200,0.22)" stroke-width="1.1"/><line x1="1548.3" y1="749.5" x2="1548.3" y2="911.2" stroke="rgba(200,200,200,0.22)" stroke-width="1.1"/><line x1="1638.3" y1="749.5" x2="1638.3" y2="911.2" stroke="rgba(200,200,200,0.22)" stroke-width="1.1"/><line x1="1727.5" y1="749.5" x2="1727.5" y2="911.2" stroke="rgba(200,200,200,0.22)" stroke-width="1.1"/><polyline points="1289.60,829.60 1370.60,829.60 1459.00,829.60 1548.30,829.60 1638.30,829.60 1727.50,829.60" fill="none" stroke="#7EB26D" stroke-width="1.2" stroke-linejoin="round"/><polyline points="1289.60,829.60 1370.60,829.60 1459.00,829.60 1548.30,829.60 1638.30,829.60 1727.50,829.60" fill="none" stroke="#EAB839" stroke-width="1.2" stroke-linejoin="round"/></svg>
<div class="t" style="right:567.8px;top:739.9px;font-size:12.6px;line-height:18px;color:#c7c7d1;letter-spacing:0.6px;-webkit-text-stroke:0.05px #c7c7d1;">1</div>
<div class="t" style="right:567.8px;top:779.5px;font-size:12.6px;line-height:18px;color:#c7c7d1;letter-spacing:0.6px;-webkit-text-stroke:0.05px #c7c7d1;">0.500</div>
<div class="t" style="right:567.8px;top:820.2px;font-size:12.6px;line-height:18px;color:#c7c7d1;letter-spacing:0.6px;-webkit-text-stroke:0.05px #c7c7d1;">0</div>
<div class="t" style="right:567.8px;top:860.9px;font-size:12.6px;line-height:18px;color:#c7c7d1;letter-spacing:0.6px;-webkit-text-stroke:0.05px #c7c7d1;">-0.500</div>
<div class="t" style="right:567.8px;top:901.6px;font-size:12.6px;line-height:18px;color:#c7c7d1;letter-spacing:0.6px;-webkit-text-stroke:0.05px #c7c7d1;">-1</div>
<div class="t c" style="left:1070.9px;width:600px;top:917.9px;font-size:12.6px;line-height:18px;color:#c7c7d1;letter-spacing:0.6px;-webkit-text-stroke:0.05px #c7c7d1;">12:38:10</div>
<div class="t c" style="left:1159.3px;width:600px;top:917.9px;font-size:12.6px;line-height:18px;color:#c7c7d1;letter-spacing:0.6px;-webkit-text-stroke:0.05px #c7c7d1;">12:38:20</div>
<div class="t c" style="left:1248.6px;width:600px;top:917.9px;font-size:12.6px;line-height:18px;color:#c7c7d1;letter-spacing:0.6px;-webkit-text-stroke:0.05px #c7c7d1;">12:38:30</div>
<div class="t c" style="left:1338.6px;width:600px;top:917.9px;font-size:12.6px;line-height:18px;color:#c7c7d1;letter-spacing:0.6px;-webkit-text-stroke:0.05px #c7c7d1;">12:38:40</div>
<div class="t c" style="left:1427.8px;width:600px;top:917.9px;font-size:12.6px;line-height:18px;color:#c7c7d1;letter-spacing:0.6px;-webkit-text-stroke:0.05px #c7c7d1;">12:38:50</div>
<div style="position:absolute;left:1252px;top:953.3px;width:15px;height:4px;border-radius:1px;background:#7EB26D"></div>
<div class="t" style="left:1282.5px;top:945.0px;font-size:13.0px;line-height:19px;color:#ccccdc;letter-spacing:0.3px;-webkit-text-stroke:0.15px #ccccdc;">delete objects</div>
<div class="t" style="left:1386.2px;top:945.0px;font-size:13.0px;line-height:19px;color:#ccccdc;letter-spacing:0.3px;-webkit-text-stroke:0.15px #ccccdc;">Avg: 0</div>
<div class="t" style="left:1433.2px;top:945.0px;font-size:13.0px;line-height:19px;color:#ccccdc;letter-spacing:0.3px;-webkit-text-stroke:0.15px #ccccdc;">Total: 0</div>
<div style="position:absolute;left:1491.3px;top:953.3px;width:15px;height:4px;border-radius:1px;background:#EAB839"></div>
<div class="t" style="left:1521.6px;top:945.0px;font-size:13.0px;line-height:19px;color:#ccccdc;letter-spacing:0.3px;-webkit-text-stroke:0.15px #ccccdc;">delete containers</div>
<div class="t" style="left:1646.2px;top:945.0px;font-size:13.0px;line-height:19px;color:#ccccdc;letter-spacing:0.3px;-webkit-text-stroke:0.15px #ccccdc;">Avg: 0</div>
<div class="t" style="left:1692.5px;top:945.0px;font-size:13.0px;line-height:19px;color:#ccccdc;letter-spacing:0.3px;-webkit-text-stroke:0.15px #ccccdc;">Total: 0</div>
</div></body></html>
